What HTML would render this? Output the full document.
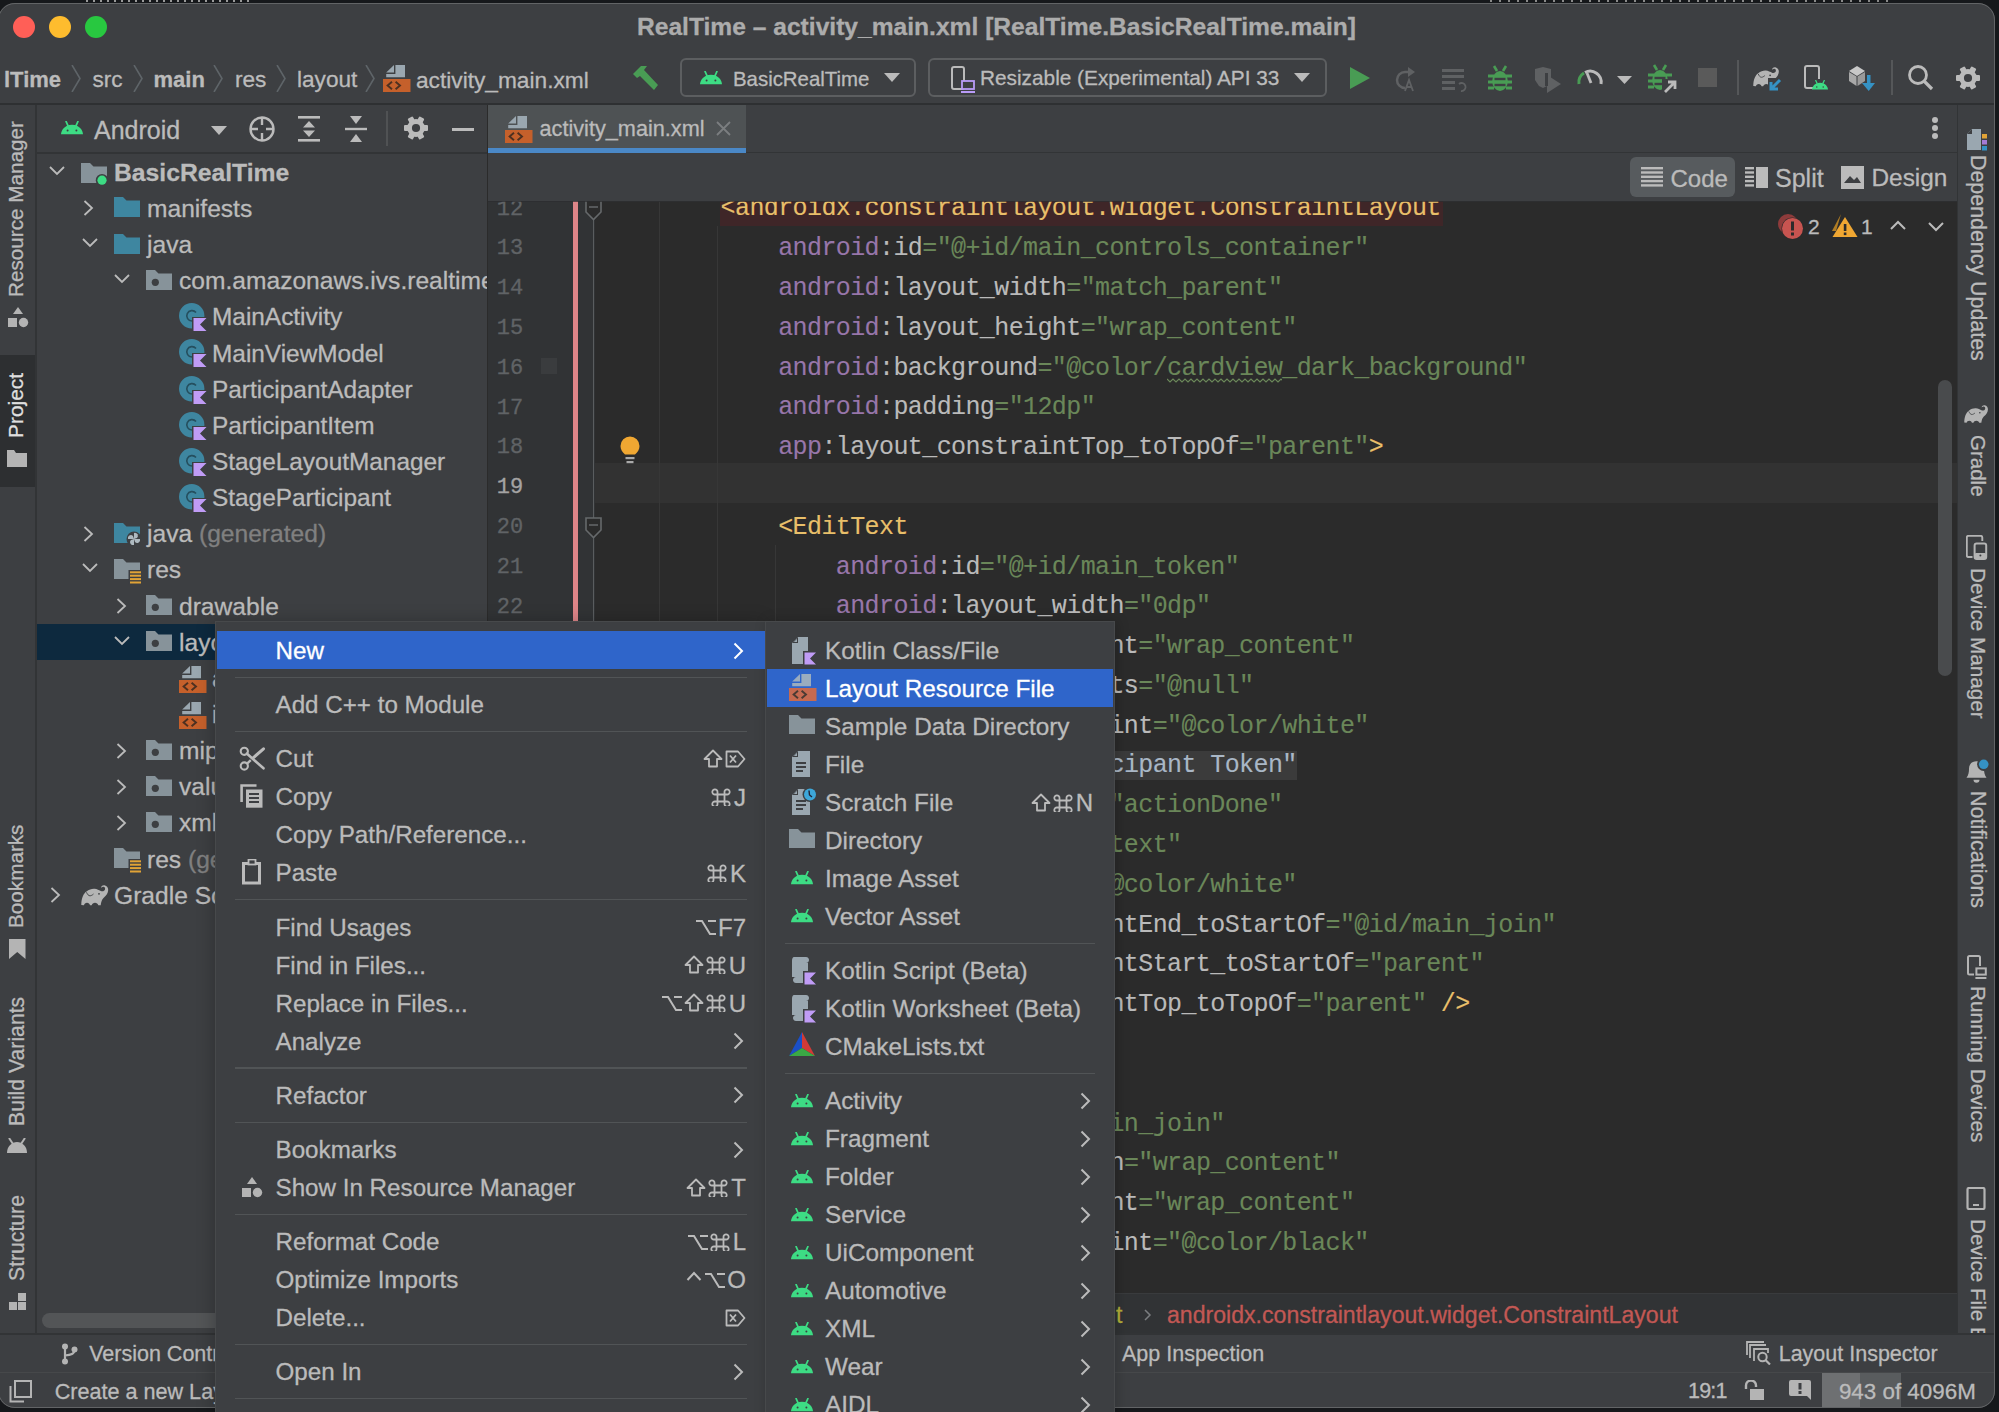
<!DOCTYPE html><html><head><meta charset="utf-8"><style>
html,body{margin:0;padding:0}
body{width:1999px;height:1412px;background:#16181b;position:relative;overflow:hidden;font-family:"Liberation Sans",sans-serif}
.t{position:absolute;white-space:pre;line-height:1;-webkit-text-stroke:0.3px currentColor}
.r{position:absolute}
#win{position:absolute;left:0;top:0;width:1999px;height:1412px;clip-path:inset(3px 4px 4px -2px round 17px);background:#3d3f42}
</style></head><body>

<div class="r" style="left:86px;top:0;width:165px;height:2px;background:repeating-linear-gradient(90deg,#9a9a9a 0 2px,transparent 2px 7px)"></div>
<div class="r" style="left:1490px;top:0;width:400px;height:2px;background:repeating-linear-gradient(90deg,#8a8a8a 0 2px,transparent 2px 9px)"></div>
<div id="win">
<div class="r" style="left:0px;top:3px;width:1995px;height:49px;background:#3d3f42;"></div>
<div class="r" style="left:12.5px;top:16px;width:22px;height:22px;border-radius:50%;background:#ff5f57"></div>
<div class="r" style="left:49px;top:16px;width:22px;height:22px;border-radius:50%;background:#febc2e"></div>
<div class="r" style="left:85px;top:16px;width:22px;height:22px;border-radius:50%;background:#28c840"></div>
<div class="t" style="left:637px;top:14.5px;font-size:24.6px;color:#acacac;font-weight:bold;font-family:'Liberation Sans', sans-serif;">RealTime – activity_main.xml [RealTime.BasicRealTime.main]</div>
<div class="t" style="left:4px;top:69.2px;font-size:22px;color:#bbbbbb;font-weight:bold;font-family:'Liberation Sans', sans-serif;">lTime</div>
<svg class="r" style="left:71px;top:65px;" width="10" height="27" viewBox="0 0 10 27"><polyline points="1,0 9,13.5 1,27" fill="none" stroke="#5e6468" stroke-width="1.6"/></svg>
<div class="t" style="left:92.5px;top:68.7px;font-size:22.6px;color:#bbbbbb;font-weight:normal;font-family:'Liberation Sans', sans-serif;">src</div>
<svg class="r" style="left:133px;top:65px;" width="10" height="27" viewBox="0 0 10 27"><polyline points="1,0 9,13.5 1,27" fill="none" stroke="#5e6468" stroke-width="1.6"/></svg>
<div class="t" style="left:153.5px;top:69.2px;font-size:22px;color:#bbbbbb;font-weight:bold;font-family:'Liberation Sans', sans-serif;">main</div>
<svg class="r" style="left:213px;top:65px;" width="10" height="27" viewBox="0 0 10 27"><polyline points="1,0 9,13.5 1,27" fill="none" stroke="#5e6468" stroke-width="1.6"/></svg>
<div class="t" style="left:235px;top:68.7px;font-size:22.6px;color:#bbbbbb;font-weight:normal;font-family:'Liberation Sans', sans-serif;">res</div>
<svg class="r" style="left:276px;top:65px;" width="10" height="27" viewBox="0 0 10 27"><polyline points="1,0 9,13.5 1,27" fill="none" stroke="#5e6468" stroke-width="1.6"/></svg>
<div class="t" style="left:297px;top:68.7px;font-size:22.6px;color:#bbbbbb;font-weight:normal;font-family:'Liberation Sans', sans-serif;">layout</div>
<svg class="r" style="left:365px;top:65px;" width="10" height="27" viewBox="0 0 10 27"><polyline points="1,0 9,13.5 1,27" fill="none" stroke="#5e6468" stroke-width="1.6"/></svg>
<svg class="r" style="left:383px;top:65.3px;" width="28" height="28" viewBox="0 0 28 28"><path d="M11 0 L3.2 7.5 L11 7.5 Z" fill="#9aa7b0"/><path d="M12.4 0 L22 0 L22 12.2 L3.2 12.2 L3.2 8.9 L12.4 8.9 Z" fill="#9aa7b0"/><rect x="0" y="14" width="27.5" height="13" fill="#c5602b"/><polyline points="9,16.8 4.6,20.5 9,24.2" fill="none" stroke="#4d3020" stroke-width="1.9"/><polyline points="12.6,16.8 17,20.5 12.6,24.2" fill="none" stroke="#4d3020" stroke-width="1.9"/></svg>
<div class="t" style="left:416px;top:68.6px;font-size:22.7px;color:#bbbbbb;font-weight:normal;font-family:'Liberation Sans', sans-serif;">activity_main.xml</div>
<svg class="r" style="left:631px;top:64px;" width="30" height="28" viewBox="0 0 30 28"><path d="M2 10 L10 2 L16 2 L13 6 L27 21 L23 26 L9 12 L6 14 Z" fill="#499c54"/></svg>
<div class="r" style="left:680px;top:58px;width:236px;height:39px;border:2px solid #5c5e60;border-radius:6px;box-sizing:border-box"></div>
<svg class="r" style="left:700px;top:71px;" width="22" height="14" viewBox="0 0 22 14"><path d="M11.0 3.696 C3.3 3.696 0 9.899999999999999 0 13.2 L22 13.2 C22 9.899999999999999 18.7 3.696 11.0 3.696 Z" fill="#3ddc84"/><line x1="4.84" y1="0" x2="7.260000000000001" y2="5.28" stroke="#3ddc84" stroke-width="1.76"/><line x1="17.16" y1="0" x2="14.74" y2="5.28" stroke="#3ddc84" stroke-width="1.76"/><circle cx="6.6" cy="9.504" r="0.99" fill="#3d3f42"/><circle cx="15.399999999999999" cy="9.504" r="0.99" fill="#3d3f42"/></svg>
<div class="t" style="left:733px;top:68.5px;font-size:20.4px;color:#bbbbbb;font-weight:normal;font-family:'Liberation Sans', sans-serif;">BasicRealTime</div>
<svg class="r" style="left:884px;top:73px;" width="16" height="10" viewBox="0 0 16 10"><path d="M0 0 L16 0 L8 9 Z" fill="#bbbbbb"/></svg>
<div class="r" style="left:928px;top:58px;width:399px;height:39px;border:2px solid #5c5e60;border-radius:6px;box-sizing:border-box"></div>
<svg class="r" style="left:950px;top:66px;" width="26" height="28" viewBox="0 0 26 28"><rect x="2" y="1" width="12" height="22" rx="2" fill="none" stroke="#bbbbbb" stroke-width="2"/><rect x="12" y="15" width="12" height="8" fill="#3d3f42" stroke="#b99bf8" stroke-width="1.8"/><line x1="11" y1="26" x2="25" y2="26" stroke="#b99bf8" stroke-width="1.8"/></svg>
<div class="t" style="left:980px;top:68.2px;font-size:20.8px;color:#bbbbbb;font-weight:normal;font-family:'Liberation Sans', sans-serif;">Resizable (Experimental) API 33</div>
<svg class="r" style="left:1294px;top:73px;" width="16" height="10" viewBox="0 0 16 10"><path d="M0 0 L16 0 L8 9 Z" fill="#bbbbbb"/></svg>
<svg class="r" style="left:1349px;top:66px;" width="22" height="24" viewBox="0 0 22 24"><path d="M1 1 L21 12 L1 23 Z" fill="#499c54"/></svg>
<svg class="r" style="left:1392px;top:66px;" width="26" height="26" viewBox="0 0 26 26"><path d="M13 22 A8 8 0 1 1 13 6 L17 6" fill="none" stroke="#5f6163" stroke-width="2.5"/><path d="M16 1 L23 6 L16 11 Z" fill="#5f6163"/><path d="M13 25 L17 14 L21 25 M14.5 21 L19.5 21" fill="none" stroke="#5f6163" stroke-width="1.8"/></svg>
<svg class="r" style="left:1440px;top:67px;" width="28" height="26" viewBox="0 0 28 26"><rect x="2" y="2" width="22" height="3" fill="#5f6163"/><rect x="2" y="8" width="22" height="3" fill="#5f6163"/><rect x="2" y="14" width="13" height="3" fill="#5f6163"/><rect x="2" y="20" width="13" height="3" fill="#5f6163"/><path d="M19 17 A4 4 0 1 1 21 24" fill="none" stroke="#5f6163" stroke-width="1.8"/></svg>
<svg class="r" style="left:1488px;top:65px;" width="24" height="27" viewBox="0 0 24 27"><ellipse cx="12" cy="16" rx="7.8" ry="10" fill="#499c54"/><line x1="6" y1="1" x2="9" y2="6" stroke="#499c54" stroke-width="2.6"/><line x1="18" y1="1" x2="15" y2="6" stroke="#499c54" stroke-width="2.6"/><rect x="0" y="9.5" width="6" height="3" fill="#499c54"/><rect x="18" y="9.5" width="6" height="3" fill="#499c54"/><rect x="0" y="15.5" width="6" height="3" fill="#499c54"/><rect x="18" y="15.5" width="6" height="3" fill="#499c54"/><rect x="0" y="21.5" width="6" height="3" fill="#499c54"/><rect x="18" y="21.5" width="6" height="3" fill="#499c54"/><rect x="6.5" y="12.8" width="11" height="2.4" fill="#3d3f42"/><rect x="6.5" y="18.8" width="11" height="2.4" fill="#3d3f42"/></svg>
<svg class="r" style="left:1533px;top:66px;" width="30" height="28" viewBox="0 0 30 28"><path d="M2 3 L10 1 L18 3 L18 14 L14 20 L10 22 L6 20 L2 14 Z" fill="#5f6163"/><path d="M14 9 L28 18 L14 27 Z" fill="#5f6163"/><rect x="12" y="7" width="3" height="13" fill="#3d3f42"/></svg>
<svg class="r" style="left:1576px;top:67px;" width="28" height="20" viewBox="0 0 28 20"><path d="M3 17 A11 11 0 0 1 8 6" fill="none" stroke="#499c54" stroke-width="3"/><path d="M9 5.5 A11 11 0 0 1 25 17" fill="none" stroke="#bbbbbb" stroke-width="3"/><line x1="11" y1="6" x2="15" y2="16" stroke="#bbbbbb" stroke-width="2.8"/></svg>
<svg class="r" style="left:1617px;top:76px;" width="15" height="9" viewBox="0 0 15 9"><path d="M0 0 L15 0 L7.5 8 Z" fill="#bbbbbb"/></svg>
<svg class="r" style="left:1648px;top:64px;" width="30" height="30" viewBox="0 0 30 30"><ellipse cx="12" cy="16" rx="7.8" ry="10" fill="#499c54"/><line x1="6" y1="1" x2="9" y2="6" stroke="#499c54" stroke-width="2.6"/><line x1="18" y1="1" x2="15" y2="6" stroke="#499c54" stroke-width="2.6"/><rect x="0" y="9.5" width="6" height="3" fill="#499c54"/><rect x="18" y="9.5" width="6" height="3" fill="#499c54"/><rect x="0" y="15.5" width="6" height="3" fill="#499c54"/><rect x="18" y="15.5" width="6" height="3" fill="#499c54"/><rect x="0" y="21.5" width="6" height="3" fill="#499c54"/><rect x="18" y="21.5" width="6" height="3" fill="#499c54"/><rect x="6.5" y="12.8" width="11" height="2.4" fill="#3d3f42"/><rect x="6.5" y="18.8" width="11" height="2.4" fill="#3d3f42"/><rect x="14" y="15" width="16" height="15" fill="#3d3f42"/><path d="M17 28 L27 18 M20 18 L27 18 L27 25" fill="none" stroke="#bbbbbb" stroke-width="2.8"/></svg>
<div class="r" style="left:1698px;top:68px;width:19px;height:19px;background:#5a5a5a;"></div>
<div class="r" style="left:1737px;top:60px;width:1.5px;height:35px;background:#555759;"></div>
<svg class="r" style="left:1753px;top:66px;" width="30" height="27" viewBox="0 0 30 27"><g transform="translate(0 1) scale(0.95)"><path d="M0.3 20 C0.3 13 2.5 8.5 5.5 6.5 C8 4.5 11 3.6 13.5 3.8 C16 4 18 5.3 20.5 6.2 C22 6.6 23.5 6 24 4.5 C24.5 3 23.5 1.5 22 1.8 C21 2 20.5 2.8 20 2.5 C20.5 0.8 22 0 23.5 0.3 C26 0.8 27.3 3 27.2 5 C27 8 25.5 10.5 22.5 13 C21 14.5 20 17 19.7 20.3 L17.3 20.3 C17 18.8 15.5 17.8 14 17.8 C12.5 17.8 11 18.8 10.7 20.3 L9 20.3 C8.7 18.8 7.5 17.8 6 17.8 C4.5 17.8 3.2 18.8 3 20.3 Z" fill="#b4b4b4"/><path d="M5.5 7.3 C6.5 9.5 7.5 10.8 9 10.8 C10 10.8 11.5 10 12.5 9" fill="none" stroke="#3d3f42" stroke-width="0.9"/><circle cx="18" cy="8.8" r="0.9" fill="#3d3f42"/></g><rect x="15" y="12" width="15" height="15" fill="#3d3f42"/><path d="M27 14 L18 23 M18 16 L18 23 L25 23" fill="none" stroke="#3592c4" stroke-width="3"/></svg>
<svg class="r" style="left:1804px;top:65px;" width="26" height="28" viewBox="0 0 26 28"><rect x="1" y="1" width="14" height="22" rx="2" fill="none" stroke="#bbbbbb" stroke-width="2"/><rect x="10" y="14" width="16" height="14" fill="#3d3f42"/></svg>
<svg class="r" style="left:1812px;top:80px;" width="16" height="10" viewBox="0 0 16 10"><path d="M8.0 2.688 C2.4 2.688 0 7.199999999999999 0 9.6 L16 9.6 C16 7.199999999999999 13.6 2.688 8.0 2.688 Z" fill="#3ddc84"/><line x1="3.52" y1="0" x2="5.28" y2="3.84" stroke="#3ddc84" stroke-width="1.28"/><line x1="12.48" y1="0" x2="10.72" y2="3.84" stroke="#3ddc84" stroke-width="1.28"/><circle cx="4.8" cy="6.912" r="0.72" fill="#3d3f42"/><circle cx="11.2" cy="6.912" r="0.72" fill="#3d3f42"/></svg>
<svg class="r" style="left:1847px;top:64px;" width="32" height="30" viewBox="0 0 32 30"><path d="M2 7 L10 2 L18 7 L10 12 Z" fill="#c8c8c8"/><path d="M2 8 L9.5 12.5 L9.5 22 L2 17 Z" fill="#a8a8a8"/><path d="M10.5 12.5 L18 8 L18 17 L10.5 22 Z" fill="#9a9a9a"/><rect x="20" y="11" width="3.5" height="10" fill="#3592c4"/><path d="M15 19 L28 19 L21.7 27 Z" fill="#3592c4"/></svg>
<div class="r" style="left:1891px;top:60px;width:1.5px;height:35px;background:#555759;"></div>
<svg class="r" style="left:1907px;top:64px;" width="28" height="28" viewBox="0 0 28 28"><circle cx="11" cy="11" r="8.5" fill="none" stroke="#bbbbbb" stroke-width="2.8"/><line x1="17" y1="17" x2="25" y2="25" stroke="#bbbbbb" stroke-width="3.2"/></svg>
<svg class="r" style="left:1956px;top:66px;" width="24" height="24" viewBox="0 0 24 24"><circle cx="12.0" cy="12.0" r="8.879999999999999" fill="#bbbbbb"/><rect x="9.120000000000001" y="0" width="5.76" height="7.199999999999999" rx="1" fill="#bbbbbb" transform="rotate(30 12.0 12.0)"/><rect x="9.120000000000001" y="0" width="5.76" height="7.199999999999999" rx="1" fill="#bbbbbb" transform="rotate(90 12.0 12.0)"/><rect x="9.120000000000001" y="0" width="5.76" height="7.199999999999999" rx="1" fill="#bbbbbb" transform="rotate(150 12.0 12.0)"/><rect x="9.120000000000001" y="0" width="5.76" height="7.199999999999999" rx="1" fill="#bbbbbb" transform="rotate(210 12.0 12.0)"/><rect x="9.120000000000001" y="0" width="5.76" height="7.199999999999999" rx="1" fill="#bbbbbb" transform="rotate(270 12.0 12.0)"/><rect x="9.120000000000001" y="0" width="5.76" height="7.199999999999999" rx="1" fill="#bbbbbb" transform="rotate(330 12.0 12.0)"/><circle cx="12.0" cy="12.0" r="4.08" fill="#3d3f42"/></svg>
<div class="r" style="left:0px;top:103px;width:1995px;height:2px;background:#2e3032;"></div>
<div class="r" style="left:0px;top:105px;width:35px;height:1230px;background:#3d3f42;"></div>
<div class="r" style="left:35px;top:105px;width:1.5px;height:1230px;background:#323436;"></div>
<div class="r" style="left:0px;top:355px;width:35px;height:132px;background:#2d2f31;"></div>
<div class="t" style="left:6.2px;top:297px;font-size:20.7px;color:#bbbbbb;transform-origin:0 0;transform:rotate(-90deg)">Resource Manager</div>
<svg class="r" style="left:7px;top:307px;" width="22" height="21" viewBox="0 0 22 21"><path d="M11 0 L16 7 L6 7 Z" fill="#b4b4b4"/><rect x="1" y="11" width="9" height="9" fill="#b4b4b4"/><circle cx="16.5" cy="15.5" r="4.7" fill="#b4b4b4"/></svg>
<div class="t" style="left:6.2px;top:438px;font-size:20.9px;color:#dfdfdf;transform-origin:0 0;transform:rotate(-90deg)">Project</div>
<svg class="r" style="left:7px;top:450px;" width="21" height="17" viewBox="0 0 21 17"><path d="M0 0 L7 0 L9 3 L20 3 L20 17 L0 17 Z" fill="#b4b4b4"/></svg>
<div class="t" style="left:6.2px;top:928.3px;font-size:20.7px;color:#bbbbbb;transform-origin:0 0;transform:rotate(-90deg)">Bookmarks</div>
<svg class="r" style="left:9px;top:938.5px;" width="17" height="20" viewBox="0 0 17 20"><path d="M0 0 L16.5 0 L16.5 20 L8.25 13 L0 20 Z" fill="#b4b4b4"/></svg>
<div class="t" style="left:6.2px;top:1125.7px;font-size:21.2px;color:#bbbbbb;transform-origin:0 0;transform:rotate(-90deg)">Build Variants</div>
<svg class="r" style="left:6px;top:1137.5px;" width="22" height="16" viewBox="0 0 22 16"><path d="M1 15 C1 8 6 4 11 4 C16 4 21 8 21 15 Z" fill="#b4b4b4"/><line x1="3" y1="0" x2="7" y2="6" stroke="#b4b4b4" stroke-width="2"/><line x1="19" y1="0" x2="15" y2="6" stroke="#b4b4b4" stroke-width="2"/></svg>
<div class="t" style="left:6.2px;top:1281px;font-size:21.2px;color:#bbbbbb;transform-origin:0 0;transform:rotate(-90deg)">Structure</div>
<svg class="r" style="left:8.5px;top:1293px;" width="18" height="18" viewBox="0 0 18 18"><rect x="9" y="0" width="8" height="8" fill="#b4b4b4"/><rect x="0" y="9" width="8" height="8" fill="#b4b4b4"/><rect x="9" y="9" width="8" height="8" fill="#b4b4b4"/></svg>
<div class="r" style="left:36.5px;top:105px;width:451px;height:1230px;background:#3d3f42;"></div>
<svg class="r" style="left:61px;top:121px;" width="22" height="14" viewBox="0 0 22 14"><path d="M11.0 3.696 C3.3 3.696 0 9.899999999999999 0 13.2 L22 13.2 C22 9.899999999999999 18.7 3.696 11.0 3.696 Z" fill="#3ddc84"/><line x1="4.84" y1="0" x2="7.260000000000001" y2="5.28" stroke="#3ddc84" stroke-width="1.76"/><line x1="17.16" y1="0" x2="14.74" y2="5.28" stroke="#3ddc84" stroke-width="1.76"/><circle cx="6.6" cy="9.504" r="0.99" fill="#3d3f42"/><circle cx="15.399999999999999" cy="9.504" r="0.99" fill="#3d3f42"/></svg>
<div class="t" style="left:94px;top:117.9px;font-size:25px;color:#bbbbbb;font-weight:normal;font-family:'Liberation Sans', sans-serif;">Android</div>
<svg class="r" style="left:211px;top:126px;" width="16" height="10" viewBox="0 0 16 10"><path d="M0 0 L16 0 L8 9 Z" fill="#bbbbbb"/></svg>
<svg class="r" style="left:248px;top:115px;" width="28" height="28" viewBox="0 0 28 28"><circle cx="14" cy="14" r="11.5" fill="none" stroke="#bbbbbb" stroke-width="2.4"/><path d="M14 2 L14 10 M14 18 L14 26 M2 14 L10 14 M18 14 L26 14" stroke="#bbbbbb" stroke-width="2.4"/></svg>
<svg class="r" style="left:297px;top:115px;" width="24" height="28" viewBox="0 0 24 28"><rect x="1" y="1" width="22" height="2.6" fill="#bbbbbb"/><rect x="1" y="24" width="22" height="2.6" fill="#bbbbbb"/><path d="M12 6 L18 12.5 L6 12.5 Z M12 22 L18 15.5 L6 15.5 Z" fill="#bbbbbb"/></svg>
<svg class="r" style="left:344px;top:115px;" width="24" height="28" viewBox="0 0 24 28"><path d="M6 1 L18 1 L12 9 Z M6 27 L18 27 L12 19 Z" fill="#bbbbbb"/><rect x="1" y="12.8" width="22" height="2.4" fill="#bbbbbb"/></svg>
<div class="r" style="left:386px;top:111px;width:1.5px;height:35px;background:#505254;"></div>
<svg class="r" style="left:404px;top:116px;" width="24" height="24" viewBox="0 0 24 24"><circle cx="12.0" cy="12.0" r="8.879999999999999" fill="#bbbbbb"/><rect x="9.120000000000001" y="0" width="5.76" height="7.199999999999999" rx="1" fill="#bbbbbb" transform="rotate(30 12.0 12.0)"/><rect x="9.120000000000001" y="0" width="5.76" height="7.199999999999999" rx="1" fill="#bbbbbb" transform="rotate(90 12.0 12.0)"/><rect x="9.120000000000001" y="0" width="5.76" height="7.199999999999999" rx="1" fill="#bbbbbb" transform="rotate(150 12.0 12.0)"/><rect x="9.120000000000001" y="0" width="5.76" height="7.199999999999999" rx="1" fill="#bbbbbb" transform="rotate(210 12.0 12.0)"/><rect x="9.120000000000001" y="0" width="5.76" height="7.199999999999999" rx="1" fill="#bbbbbb" transform="rotate(270 12.0 12.0)"/><rect x="9.120000000000001" y="0" width="5.76" height="7.199999999999999" rx="1" fill="#bbbbbb" transform="rotate(330 12.0 12.0)"/><circle cx="12.0" cy="12.0" r="4.08" fill="#3d3f42"/></svg>
<div class="r" style="left:452px;top:128px;width:22px;height:3px;background:#bbbbbb;"></div>
<div class="r" style="left:36.5px;top:152px;width:451px;height:1.5px;background:#323436;"></div>
<div class="r" style="left:36.5px;top:624px;width:451px;height:36px;background:#0d293e;"></div>
<svg class="r" style="left:49px;top:165.7px;" width="16" height="10" viewBox="0 0 16 10"><polyline points="1,1 8,8 15,1" fill="none" stroke="#bbbbbb" stroke-width="1.8"/></svg>
<svg class="r" style="left:81px;top:162.79999999999998px;" width="27" height="22" viewBox="0 0 27 22"><path d="M0 0 L9 0 L12.5 3.6 L26 3.6 L26 20 L0 20 Z" fill="#87939a"/><circle cx="21" cy="17.2" r="6.2" fill="#3d3f42"/><circle cx="21" cy="17.2" r="4.6" fill="#3ddc84"/></svg>
<div class="t" style="left:114px;top:160.6px;font-size:24.7px;color:#bbbbbb;font-weight:bold;font-family:'Liberation Sans', sans-serif;">BasicRealTime</div>
<svg class="r" style="left:83.2px;top:200.35px;" width="11" height="16" viewBox="0 0 11 16"><polyline points="1.5,1 9,8 1.5,15" fill="none" stroke="#bbbbbb" stroke-width="1.8"/></svg>
<svg class="r" style="left:114px;top:197.35px;" width="27" height="22" viewBox="0 0 27 22"><path d="M0 0 L9 0 L12.5 3.6 L26 3.6 L26 20 L0 20 Z" fill="#3e86a0"/></svg>
<div class="t" style="left:147px;top:196.8px;font-size:24.6px;color:#bbbbbb;font-weight:normal;font-family:'Liberation Sans', sans-serif;">manifests</div>
<svg class="r" style="left:82px;top:238.0px;" width="16" height="10" viewBox="0 0 16 10"><polyline points="1,1 8,8 15,1" fill="none" stroke="#bbbbbb" stroke-width="1.8"/></svg>
<svg class="r" style="left:114px;top:233.5px;" width="27" height="22" viewBox="0 0 27 22"><path d="M0 0 L9 0 L12.5 3.6 L26 3.6 L26 20 L0 20 Z" fill="#3e86a0"/></svg>
<div class="t" style="left:147px;top:233.0px;font-size:24.6px;color:#bbbbbb;font-weight:normal;font-family:'Liberation Sans', sans-serif;">java</div>
<svg class="r" style="left:114px;top:274.15px;" width="16" height="10" viewBox="0 0 16 10"><polyline points="1,1 8,8 15,1" fill="none" stroke="#bbbbbb" stroke-width="1.8"/></svg>
<svg class="r" style="left:146px;top:269.65px;" width="27" height="22" viewBox="0 0 27 22"><path d="M0 0 L9 0 L12.5 3.6 L26 3.6 L26 20 L0 20 Z" fill="#87939a"/><circle cx="9.3" cy="12.3" r="3.6" fill="#3d3f42"/></svg>
<div class="t" style="left:179px;top:269.1px;font-size:24.6px;color:#bbbbbb;font-weight:normal;font-family:'Liberation Sans', sans-serif;">com.amazonaws.ivs.realtime</div>
<svg class="r" style="left:179px;top:303.29999999999995px;" width="29" height="29" viewBox="0 0 29 29"><circle cx="12.7" cy="12.8" r="12.7" fill="#3e86a0"/><path d="M17 9.5 A5.2 5.2 0 1 0 13 18" fill="none" stroke="#254f5e" stroke-width="1.6"/><path d="M13 14 L28.5 14 L28.5 28 L13 28 Z" fill="#3d3f42"/><path d="M14.5 15 L27.5 15 L21 21.5 L27.5 28 L14.5 28 Z" fill="#c09cf6"/></svg>
<div class="t" style="left:212px;top:305.4px;font-size:24.4px;color:#bbbbbb;font-weight:normal;font-family:'Liberation Sans', sans-serif;">MainActivity</div>
<svg class="r" style="left:179px;top:339.45px;" width="29" height="29" viewBox="0 0 29 29"><circle cx="12.7" cy="12.8" r="12.7" fill="#3e86a0"/><path d="M17 9.5 A5.2 5.2 0 1 0 13 18" fill="none" stroke="#254f5e" stroke-width="1.6"/><path d="M13 14 L28.5 14 L28.5 28 L13 28 Z" fill="#3d3f42"/><path d="M14.5 15 L27.5 15 L21 21.5 L27.5 28 L14.5 28 Z" fill="#c09cf6"/></svg>
<div class="t" style="left:212px;top:341.6px;font-size:24.4px;color:#bbbbbb;font-weight:normal;font-family:'Liberation Sans', sans-serif;">MainViewModel</div>
<svg class="r" style="left:179px;top:375.59999999999997px;" width="29" height="29" viewBox="0 0 29 29"><circle cx="12.7" cy="12.8" r="12.7" fill="#3e86a0"/><path d="M17 9.5 A5.2 5.2 0 1 0 13 18" fill="none" stroke="#254f5e" stroke-width="1.6"/><path d="M13 14 L28.5 14 L28.5 28 L13 28 Z" fill="#3d3f42"/><path d="M14.5 15 L27.5 15 L21 21.5 L27.5 28 L14.5 28 Z" fill="#c09cf6"/></svg>
<div class="t" style="left:212px;top:377.7px;font-size:24.4px;color:#bbbbbb;font-weight:normal;font-family:'Liberation Sans', sans-serif;">ParticipantAdapter</div>
<svg class="r" style="left:179px;top:411.75px;" width="29" height="29" viewBox="0 0 29 29"><circle cx="12.7" cy="12.8" r="12.7" fill="#3e86a0"/><path d="M17 9.5 A5.2 5.2 0 1 0 13 18" fill="none" stroke="#254f5e" stroke-width="1.6"/><path d="M13 14 L28.5 14 L28.5 28 L13 28 Z" fill="#3d3f42"/><path d="M14.5 15 L27.5 15 L21 21.5 L27.5 28 L14.5 28 Z" fill="#c09cf6"/></svg>
<div class="t" style="left:212px;top:413.9px;font-size:24.4px;color:#bbbbbb;font-weight:normal;font-family:'Liberation Sans', sans-serif;">ParticipantItem</div>
<svg class="r" style="left:179px;top:447.9px;" width="29" height="29" viewBox="0 0 29 29"><circle cx="12.7" cy="12.8" r="12.7" fill="#3e86a0"/><path d="M17 9.5 A5.2 5.2 0 1 0 13 18" fill="none" stroke="#254f5e" stroke-width="1.6"/><path d="M13 14 L28.5 14 L28.5 28 L13 28 Z" fill="#3d3f42"/><path d="M14.5 15 L27.5 15 L21 21.5 L27.5 28 L14.5 28 Z" fill="#c09cf6"/></svg>
<div class="t" style="left:212px;top:450.0px;font-size:24.4px;color:#bbbbbb;font-weight:normal;font-family:'Liberation Sans', sans-serif;">StageLayoutManager</div>
<svg class="r" style="left:179px;top:484.04999999999995px;" width="29" height="29" viewBox="0 0 29 29"><circle cx="12.7" cy="12.8" r="12.7" fill="#3e86a0"/><path d="M17 9.5 A5.2 5.2 0 1 0 13 18" fill="none" stroke="#254f5e" stroke-width="1.6"/><path d="M13 14 L28.5 14 L28.5 28 L13 28 Z" fill="#3d3f42"/><path d="M14.5 15 L27.5 15 L21 21.5 L27.5 28 L14.5 28 Z" fill="#c09cf6"/></svg>
<div class="t" style="left:212px;top:486.2px;font-size:24.4px;color:#bbbbbb;font-weight:normal;font-family:'Liberation Sans', sans-serif;">StageParticipant</div>
<svg class="r" style="left:83.2px;top:525.7px;" width="11" height="16" viewBox="0 0 11 16"><polyline points="1.5,1 9,8 1.5,15" fill="none" stroke="#bbbbbb" stroke-width="1.8"/></svg>
<svg class="r" style="left:114px;top:522.7px;" width="27" height="22" viewBox="0 0 27 22"><path d="M0 0 L9 0 L12.5 3.6 L26 3.6 L26 20 L0 20 Z" fill="#3e86a0"/><circle cx="20" cy="16" r="7.5" fill="#3d3f42"/><g transform="translate(20 16)" fill="#aeb9c0"><path d="M0 -6 A3 3 0 0 1 3 -1 L0 0 Z" /><path d="M6 0 A3 3 0 0 1 1 3 L0 0 Z"/><path d="M0 6 A3 3 0 0 1 -3 1 L0 0 Z"/><path d="M-6 0 A3 3 0 0 1 -1 -3 L0 0 Z"/></g></svg>
<div class="t" style="left:147px;top:522.2px;font-size:24.6px;color:#bbbbbb;font-weight:normal;font-family:'Liberation Sans', sans-serif;">java <span style="color:#808080">(generated)</span></div>
<svg class="r" style="left:82px;top:563.3499999999999px;" width="16" height="10" viewBox="0 0 16 10"><polyline points="1,1 8,8 15,1" fill="none" stroke="#bbbbbb" stroke-width="1.8"/></svg>
<svg class="r" style="left:114px;top:558.8499999999999px;" width="29" height="26" viewBox="0 0 29 26"><path d="M0 0 L9 0 L12.5 3.6 L26 3.6 L26 20 L0 20 Z" fill="#87939a"/><rect x="14.5" y="11" width="14.5" height="15" fill="#3d3f42"/><rect x="16" y="12.3" width="11" height="2" fill="#e1a336"/><rect x="16" y="15.7" width="11" height="2" fill="#e1a336"/><rect x="16" y="19.1" width="11" height="2" fill="#e1a336"/><rect x="16" y="22.5" width="11" height="2" fill="#e1a336"/></svg>
<div class="t" style="left:147px;top:558.3px;font-size:24.6px;color:#bbbbbb;font-weight:normal;font-family:'Liberation Sans', sans-serif;">res</div>
<svg class="r" style="left:116.2px;top:598.0px;" width="11" height="16" viewBox="0 0 11 16"><polyline points="1.5,1 9,8 1.5,15" fill="none" stroke="#bbbbbb" stroke-width="1.8"/></svg>
<svg class="r" style="left:146px;top:595.0px;" width="27" height="22" viewBox="0 0 27 22"><path d="M0 0 L9 0 L12.5 3.6 L26 3.6 L26 20 L0 20 Z" fill="#87939a"/><circle cx="9.3" cy="12.3" r="3.6" fill="#3d3f42"/></svg>
<div class="t" style="left:179px;top:594.5px;font-size:24.6px;color:#bbbbbb;font-weight:normal;font-family:'Liberation Sans', sans-serif;">drawable</div>
<svg class="r" style="left:114px;top:635.65px;" width="16" height="10" viewBox="0 0 16 10"><polyline points="1,1 8,8 15,1" fill="none" stroke="#bbbbbb" stroke-width="1.8"/></svg>
<svg class="r" style="left:146px;top:631.15px;" width="27" height="22" viewBox="0 0 27 22"><path d="M0 0 L9 0 L12.5 3.6 L26 3.6 L26 20 L0 20 Z" fill="#87939a"/><circle cx="9.3" cy="12.3" r="3.6" fill="#3d3f42"/></svg>
<div class="t" style="left:179px;top:630.6px;font-size:24.6px;color:#bbbbbb;font-weight:normal;font-family:'Liberation Sans', sans-serif;">layout</div>
<svg class="r" style="left:179px;top:665.8px;" width="28" height="28" viewBox="0 0 28 28"><path d="M11 0 L3.2 7.5 L11 7.5 Z" fill="#9aa7b0"/><path d="M12.4 0 L22 0 L22 12.2 L3.2 12.2 L3.2 8.9 L12.4 8.9 Z" fill="#9aa7b0"/><rect x="0" y="14" width="27.5" height="13" fill="#c5602b"/><polyline points="9,16.8 4.6,20.5 9,24.2" fill="none" stroke="#4d3020" stroke-width="1.9"/><polyline points="12.6,16.8 17,20.5 12.6,24.2" fill="none" stroke="#4d3020" stroke-width="1.9"/></svg>
<div class="t" style="left:212px;top:666.9px;font-size:24.4px;color:#bbbbbb;font-weight:normal;font-family:'Liberation Sans', sans-serif;">activity_main.xml</div>
<svg class="r" style="left:179px;top:701.95px;" width="28" height="28" viewBox="0 0 28 28"><path d="M11 0 L3.2 7.5 L11 7.5 Z" fill="#9aa7b0"/><path d="M12.4 0 L22 0 L22 12.2 L3.2 12.2 L3.2 8.9 L12.4 8.9 Z" fill="#9aa7b0"/><rect x="0" y="14" width="27.5" height="13" fill="#c5602b"/><polyline points="9,16.8 4.6,20.5 9,24.2" fill="none" stroke="#4d3020" stroke-width="1.9"/><polyline points="12.6,16.8 17,20.5 12.6,24.2" fill="none" stroke="#4d3020" stroke-width="1.9"/></svg>
<div class="t" style="left:212px;top:703.1px;font-size:24.4px;color:#bbbbbb;font-weight:normal;font-family:'Liberation Sans', sans-serif;">item_participant.xml</div>
<svg class="r" style="left:116.2px;top:742.5999999999999px;" width="11" height="16" viewBox="0 0 11 16"><polyline points="1.5,1 9,8 1.5,15" fill="none" stroke="#bbbbbb" stroke-width="1.8"/></svg>
<svg class="r" style="left:146px;top:739.5999999999999px;" width="27" height="22" viewBox="0 0 27 22"><path d="M0 0 L9 0 L12.5 3.6 L26 3.6 L26 20 L0 20 Z" fill="#87939a"/><circle cx="9.3" cy="12.3" r="3.6" fill="#3d3f42"/></svg>
<div class="t" style="left:179px;top:739.1px;font-size:24.6px;color:#bbbbbb;font-weight:normal;font-family:'Liberation Sans', sans-serif;">mipmap</div>
<svg class="r" style="left:116.2px;top:778.75px;" width="11" height="16" viewBox="0 0 11 16"><polyline points="1.5,1 9,8 1.5,15" fill="none" stroke="#bbbbbb" stroke-width="1.8"/></svg>
<svg class="r" style="left:146px;top:775.75px;" width="27" height="22" viewBox="0 0 27 22"><path d="M0 0 L9 0 L12.5 3.6 L26 3.6 L26 20 L0 20 Z" fill="#87939a"/><circle cx="9.3" cy="12.3" r="3.6" fill="#3d3f42"/></svg>
<div class="t" style="left:179px;top:775.2px;font-size:24.6px;color:#bbbbbb;font-weight:normal;font-family:'Liberation Sans', sans-serif;">values</div>
<svg class="r" style="left:116.2px;top:814.8999999999999px;" width="11" height="16" viewBox="0 0 11 16"><polyline points="1.5,1 9,8 1.5,15" fill="none" stroke="#bbbbbb" stroke-width="1.8"/></svg>
<svg class="r" style="left:146px;top:811.8999999999999px;" width="27" height="22" viewBox="0 0 27 22"><path d="M0 0 L9 0 L12.5 3.6 L26 3.6 L26 20 L0 20 Z" fill="#87939a"/><circle cx="9.3" cy="12.3" r="3.6" fill="#3d3f42"/></svg>
<div class="t" style="left:179px;top:811.4px;font-size:24.6px;color:#bbbbbb;font-weight:normal;font-family:'Liberation Sans', sans-serif;">xml</div>
<svg class="r" style="left:114px;top:848.05px;" width="29" height="26" viewBox="0 0 29 26"><path d="M0 0 L9 0 L12.5 3.6 L26 3.6 L26 20 L0 20 Z" fill="#87939a"/><rect x="14.5" y="11" width="14.5" height="15" fill="#3d3f42"/><rect x="16" y="12.3" width="11" height="2" fill="#e1a336"/><rect x="16" y="15.7" width="11" height="2" fill="#e1a336"/><rect x="16" y="19.1" width="11" height="2" fill="#e1a336"/><rect x="16" y="22.5" width="11" height="2" fill="#e1a336"/></svg>
<div class="t" style="left:147px;top:847.5px;font-size:24.6px;color:#bbbbbb;font-weight:normal;font-family:'Liberation Sans', sans-serif;">res <span style="color:#808080">(generated)</span></div>
<svg class="r" style="left:50.2px;top:887.2px;" width="11" height="16" viewBox="0 0 11 16"><polyline points="1.5,1 9,8 1.5,15" fill="none" stroke="#bbbbbb" stroke-width="1.8"/></svg>
<svg class="r" style="left:80.5px;top:884.7px;" width="28" height="22" viewBox="0 0 28 22"><path d="M0.3 20 C0.3 13 2.5 8.5 5.5 6.5 C8 4.5 11 3.6 13.5 3.8 C16 4 18 5.3 20.5 6.2 C22 6.6 23.5 6 24 4.5 C24.5 3 23.5 1.5 22 1.8 C21 2 20.5 2.8 20 2.5 C20.5 0.8 22 0 23.5 0.3 C26 0.8 27.3 3 27.2 5 C27 8 25.5 10.5 22.5 13 C21 14.5 20 17 19.7 20.3 L17.3 20.3 C17 18.8 15.5 17.8 14 17.8 C12.5 17.8 11 18.8 10.7 20.3 L9 20.3 C8.7 18.8 7.5 17.8 6 17.8 C4.5 17.8 3.2 18.8 3 20.3 Z" fill="#b4b4b4"/><path d="M5.5 7.3 C6.5 9.5 7.5 10.8 9 10.8 C10 10.8 11.5 10 12.5 9" fill="none" stroke="#3d3f42" stroke-width="0.9"/><circle cx="18" cy="8.8" r="0.9" fill="#3d3f42"/></svg>
<div class="t" style="left:114px;top:883.7px;font-size:24.6px;color:#bbbbbb;font-weight:normal;font-family:'Liberation Sans', sans-serif;">Gradle Scripts</div>
<div class="r" style="left:42px;top:1313px;width:440px;height:15px;border-radius:8px;background:#535557"></div>
<div class="r" style="left:486.5px;top:105px;width:1.5px;height:1230px;background:#2b2b2b;"></div>
<div class="r" style="left:488px;top:105px;width:1470px;height:48px;background:#3d3f42;"></div>
<div class="r" style="left:488px;top:105px;width:258px;height:43px;background:#4e5254;"></div>
<div class="r" style="left:488px;top:148px;width:258px;height:5px;background:#4a88c7;"></div>
<div class="r" style="left:746px;top:152px;width:1212px;height:1px;background:#323436;"></div>
<svg class="r" style="left:504.5px;top:116px;" width="28" height="28" viewBox="0 0 28 28"><path d="M11 0 L3.2 7.5 L11 7.5 Z" fill="#9aa7b0"/><path d="M12.4 0 L22 0 L22 12.2 L3.2 12.2 L3.2 8.9 L12.4 8.9 Z" fill="#9aa7b0"/><rect x="0" y="14" width="27.5" height="13" fill="#c5602b"/><polyline points="9,16.8 4.6,20.5 9,24.2" fill="none" stroke="#4d3020" stroke-width="1.9"/><polyline points="12.6,16.8 17,20.5 12.6,24.2" fill="none" stroke="#4d3020" stroke-width="1.9"/></svg>
<div class="t" style="left:539.5px;top:118.1px;font-size:21.7px;color:#bbbbbb;font-weight:normal;font-family:'Liberation Sans', sans-serif;">activity_main.xml</div>
<svg class="r" style="left:716px;top:121px;" width="15" height="15" viewBox="0 0 15 15"><path d="M1 1 L14 14 M14 1 L1 14" stroke="#7b7e80" stroke-width="1.8"/></svg>
<div class="r" style="left:1932px;top:117px;width:6px;height:6px;border-radius:50%;background:#bbbbbb"></div>
<div class="r" style="left:1932px;top:125px;width:6px;height:6px;border-radius:50%;background:#bbbbbb"></div>
<div class="r" style="left:1932px;top:133px;width:6px;height:6px;border-radius:50%;background:#bbbbbb"></div>
<div class="r" style="left:488px;top:153px;width:1470px;height:48px;background:#3d3f42;"></div>
<div class="r" style="left:1630px;top:157px;width:105px;height:40px;border-radius:6px;background:#575b5e"></div>
<svg class="r" style="left:1641px;top:167px;" width="22" height="21" viewBox="0 0 22 21"><rect x="0" y="0.0" width="22" height="2.4" fill="#bbbbbb"/><rect x="0" y="4.3" width="22" height="2.4" fill="#bbbbbb"/><rect x="0" y="8.6" width="22" height="2.4" fill="#bbbbbb"/><rect x="0" y="12.9" width="22" height="2.4" fill="#bbbbbb"/><rect x="0" y="17.2" width="22" height="2.4" fill="#bbbbbb"/></svg>
<div class="t" style="left:1670.5px;top:166.7px;font-size:24px;color:#bbbbbb;font-weight:normal;font-family:'Liberation Sans', sans-serif;">Code</div>
<svg class="r" style="left:1745px;top:167px;" width="24" height="21" viewBox="0 0 24 21"><rect x="0" y="0.0" width="9" height="2.4" fill="#bbbbbb"/><rect x="0" y="4.3" width="9" height="2.4" fill="#bbbbbb"/><rect x="0" y="8.6" width="9" height="2.4" fill="#bbbbbb"/><rect x="0" y="12.9" width="9" height="2.4" fill="#bbbbbb"/><rect x="0" y="17.2" width="9" height="2.4" fill="#bbbbbb"/><rect x="11" y="0" width="12" height="21" fill="#bbbbbb"/></svg>
<div class="t" style="left:1775px;top:165.8px;font-size:25px;color:#bbbbbb;font-weight:normal;font-family:'Liberation Sans', sans-serif;">Split</div>
<svg class="r" style="left:1841px;top:166px;" width="23" height="23" viewBox="0 0 23 23"><rect x="0" y="0" width="23" height="23" fill="#bbbbbb"/><path d="M3 17 L9 10 L13 14 L16 11 L20 17 Z" fill="#3d3f42"/></svg>
<div class="t" style="left:1871.5px;top:166.3px;font-size:24.4px;color:#bbbbbb;font-weight:normal;font-family:'Liberation Sans', sans-serif;">Design</div>
<div class="r" style="left:488px;top:200.5px;width:1470px;height:1px;background:#2f3133;"></div>
<div class="r" style="left:0;top:0;width:1999px;height:1412px;clip-path:inset(201.7px 41px 119px 488px)">
<div class="r" style="left:488px;top:195px;width:1470px;height:1100px;background:#2b2b2b;"></div>
<div class="r" style="left:488px;top:195px;width:106.5px;height:1100px;background:#313335;"></div>
<div class="r" style="left:594.5px;top:463.44px;width:1364px;height:39.79px;background:#323232;"></div>
<div class="r" style="left:720px;top:201px;width:723px;height:24.7px;background:#3f2628;"></div>
<div class="r" style="left:573px;top:201px;width:4.5px;height:1092px;background:#de8588;"></div>
<div class="r" style="left:593px;top:220px;width:1.3px;height:1073px;background:#5a5d5f;"></div>
<svg class="r" style="left:585px;top:199px;" width="17" height="22" viewBox="0 0 17 22"><path d="M1 -1 L16 -1 L16 13 L8.5 20.5 L1 13 Z" fill="#2b2b2b" stroke="#66696b" stroke-width="1.6"/><line x1="4" y1="8" x2="13" y2="8" stroke="#66696b" stroke-width="1.5"/></svg>
<svg class="r" style="left:585px;top:517.03px;" width="17" height="22" viewBox="0 0 17 22"><path d="M1 1 L16 1 L16 13 L8.5 20.5 L1 13 Z" fill="#2b2b2b" stroke="#66696b" stroke-width="1.6"/><line x1="4" y1="8" x2="13" y2="8" stroke="#66696b" stroke-width="1.5"/></svg>
<div class="r" style="left:541px;top:357.67px;width:16px;height:16px;background:#3a3c3e;"></div>
<div class="r" style="left:659px;top:201px;width:1.2px;height:1092px;background:#373737;"></div>
<div class="r" style="left:717px;top:226px;width:1.2px;height:1067px;background:#373737;"></div>
<div class="r" style="left:775px;top:545px;width:1.2px;height:748px;background:#373737;"></div>
<div class="t" style="left:496.7px;top:198.6px;font-size:22px;font-family:'Liberation Mono', monospace;color:#606366">12</div>
<div class="t" style="left:496.7px;top:238.4px;font-size:22px;font-family:'Liberation Mono', monospace;color:#606366">13</div>
<div class="t" style="left:496.7px;top:278.2px;font-size:22px;font-family:'Liberation Mono', monospace;color:#606366">14</div>
<div class="t" style="left:496.7px;top:318.0px;font-size:22px;font-family:'Liberation Mono', monospace;color:#606366">15</div>
<div class="t" style="left:496.7px;top:357.8px;font-size:22px;font-family:'Liberation Mono', monospace;color:#606366">16</div>
<div class="t" style="left:496.7px;top:397.6px;font-size:22px;font-family:'Liberation Mono', monospace;color:#606366">17</div>
<div class="t" style="left:496.7px;top:437.4px;font-size:22px;font-family:'Liberation Mono', monospace;color:#606366">18</div>
<div class="t" style="left:496.7px;top:477.2px;font-size:22px;font-family:'Liberation Mono', monospace;color:#a4a3a3">19</div>
<div class="t" style="left:496.7px;top:517.0px;font-size:22px;font-family:'Liberation Mono', monospace;color:#606366">20</div>
<div class="t" style="left:496.7px;top:556.8px;font-size:22px;font-family:'Liberation Mono', monospace;color:#606366">21</div>
<div class="t" style="left:496.7px;top:596.5px;font-size:22px;font-family:'Liberation Mono', monospace;color:#606366">22</div>
<div class="t" style="left:496.7px;top:636.3px;font-size:22px;font-family:'Liberation Mono', monospace;color:#606366">23</div>
<div class="t" style="left:496.7px;top:676.1px;font-size:22px;font-family:'Liberation Mono', monospace;color:#606366">24</div>
<div class="t" style="left:496.7px;top:715.9px;font-size:22px;font-family:'Liberation Mono', monospace;color:#606366">25</div>
<div class="t" style="left:496.7px;top:755.7px;font-size:22px;font-family:'Liberation Mono', monospace;color:#606366">26</div>
<div class="t" style="left:496.7px;top:795.5px;font-size:22px;font-family:'Liberation Mono', monospace;color:#606366">27</div>
<div class="t" style="left:496.7px;top:835.3px;font-size:22px;font-family:'Liberation Mono', monospace;color:#606366">28</div>
<div class="t" style="left:496.7px;top:875.1px;font-size:22px;font-family:'Liberation Mono', monospace;color:#606366">29</div>
<div class="t" style="left:496.7px;top:914.9px;font-size:22px;font-family:'Liberation Mono', monospace;color:#606366">30</div>
<div class="t" style="left:496.7px;top:954.7px;font-size:22px;font-family:'Liberation Mono', monospace;color:#606366">31</div>
<div class="t" style="left:496.7px;top:994.4px;font-size:22px;font-family:'Liberation Mono', monospace;color:#606366">32</div>
<div class="t" style="left:496.7px;top:1034.2px;font-size:22px;font-family:'Liberation Mono', monospace;color:#606366">33</div>
<div class="t" style="left:496.7px;top:1074.0px;font-size:22px;font-family:'Liberation Mono', monospace;color:#606366">34</div>
<div class="t" style="left:496.7px;top:1113.8px;font-size:22px;font-family:'Liberation Mono', monospace;color:#606366">35</div>
<div class="t" style="left:496.7px;top:1153.6px;font-size:22px;font-family:'Liberation Mono', monospace;color:#606366">36</div>
<div class="t" style="left:496.7px;top:1193.4px;font-size:22px;font-family:'Liberation Mono', monospace;color:#606366">37</div>
<div class="t" style="left:496.7px;top:1233.2px;font-size:22px;font-family:'Liberation Mono', monospace;color:#606366">38</div>
<div class="t" style="left:496.7px;top:1273.0px;font-size:22px;font-family:'Liberation Mono', monospace;color:#606366">39</div>
<svg class="r" style="left:619px;top:436.25px;" width="22" height="30" viewBox="0 0 22 30"><path d="M6 18.5 C3 16 1.5 13 1.5 10 A9.5 9.5 0 0 1 20.5 10 C20.5 13 19 16 16 18.5 Z" fill="#f0a732"/><rect x="6.5" y="21" width="9" height="2.2" fill="#a9a9a9"/><rect x="7.5" y="25" width="7" height="2.2" fill="#a9a9a9"/></svg>
<div class="t" style="left:720.6px;top:196.3px;font-size:25px;letter-spacing:-0.6px;-webkit-text-stroke:0.12px currentColor;font-family:'Liberation Mono', monospace"><span style="color:#e8bf6a">&lt;androidx.constraintlayout.widget.ConstraintLayout</span></div>
<div class="t" style="left:778.2px;top:236.1px;font-size:25px;letter-spacing:-0.6px;-webkit-text-stroke:0.12px currentColor;font-family:'Liberation Mono', monospace"><span style="color:#9876aa">android</span><span style="color:#bababa">:</span><span style="color:#bababa">id</span><span style="color:#6a8759">=</span><span style="color:#6a8759">&quot;@+id/main_controls_container&quot;</span></div>
<div class="t" style="left:778.2px;top:275.9px;font-size:25px;letter-spacing:-0.6px;-webkit-text-stroke:0.12px currentColor;font-family:'Liberation Mono', monospace"><span style="color:#9876aa">android</span><span style="color:#bababa">:</span><span style="color:#bababa">layout_width</span><span style="color:#6a8759">=</span><span style="color:#6a8759">&quot;match_parent&quot;</span></div>
<div class="t" style="left:778.2px;top:315.7px;font-size:25px;letter-spacing:-0.6px;-webkit-text-stroke:0.12px currentColor;font-family:'Liberation Mono', monospace"><span style="color:#9876aa">android</span><span style="color:#bababa">:</span><span style="color:#bababa">layout_height</span><span style="color:#6a8759">=</span><span style="color:#6a8759">&quot;wrap_content&quot;</span></div>
<div class="t" style="left:778.2px;top:355.5px;font-size:25px;letter-spacing:-0.6px;-webkit-text-stroke:0.12px currentColor;font-family:'Liberation Mono', monospace"><span style="color:#9876aa">android</span><span style="color:#bababa">:</span><span style="color:#bababa">background</span><span style="color:#6a8759">=</span><span style="color:#6a8759">&quot;@color/cardview_dark_background&quot;</span></div>
<div class="t" style="left:778.2px;top:395.3px;font-size:25px;letter-spacing:-0.6px;-webkit-text-stroke:0.12px currentColor;font-family:'Liberation Mono', monospace"><span style="color:#9876aa">android</span><span style="color:#bababa">:</span><span style="color:#bababa">padding</span><span style="color:#6a8759">=</span><span style="color:#6a8759">&quot;12dp&quot;</span></div>
<div class="t" style="left:778.2px;top:435.1px;font-size:25px;letter-spacing:-0.6px;-webkit-text-stroke:0.12px currentColor;font-family:'Liberation Mono', monospace"><span style="color:#9876aa">app</span><span style="color:#bababa">:</span><span style="color:#bababa">layout_constraintTop_toTopOf</span><span style="color:#6a8759">=</span><span style="color:#6a8759">&quot;parent&quot;</span><span style="color:#e8bf6a">&gt;</span></div>
<div class="t" style="left:778.2px;top:514.7px;font-size:25px;letter-spacing:-0.6px;-webkit-text-stroke:0.12px currentColor;font-family:'Liberation Mono', monospace"><span style="color:#e8bf6a">&lt;EditText</span></div>
<div class="t" style="left:835.8px;top:554.5px;font-size:25px;letter-spacing:-0.6px;-webkit-text-stroke:0.12px currentColor;font-family:'Liberation Mono', monospace"><span style="color:#9876aa">android</span><span style="color:#bababa">:</span><span style="color:#bababa">id</span><span style="color:#6a8759">=</span><span style="color:#6a8759">&quot;@+id/main_token&quot;</span></div>
<div class="t" style="left:835.8px;top:594.2px;font-size:25px;letter-spacing:-0.6px;-webkit-text-stroke:0.12px currentColor;font-family:'Liberation Mono', monospace"><span style="color:#9876aa">android</span><span style="color:#bababa">:</span><span style="color:#bababa">layout_width</span><span style="color:#6a8759">=</span><span style="color:#6a8759">&quot;0dp&quot;</span></div>
<div class="t" style="left:835.8px;top:634.0px;font-size:25px;letter-spacing:-0.6px;-webkit-text-stroke:0.12px currentColor;font-family:'Liberation Mono', monospace"><span style="color:#9876aa">android</span><span style="color:#bababa">:</span><span style="color:#bababa">layout_height</span><span style="color:#6a8759">=</span><span style="color:#6a8759">&quot;wrap_content&quot;</span></div>
<div class="t" style="left:835.8px;top:673.8px;font-size:25px;letter-spacing:-0.6px;-webkit-text-stroke:0.12px currentColor;font-family:'Liberation Mono', monospace"><span style="color:#9876aa">android</span><span style="color:#bababa">:</span><span style="color:#bababa">autofillHints</span><span style="color:#6a8759">=</span><span style="color:#6a8759">&quot;@null&quot;</span></div>
<div class="t" style="left:835.8px;top:713.6px;font-size:25px;letter-spacing:-0.6px;-webkit-text-stroke:0.12px currentColor;font-family:'Liberation Mono', monospace"><span style="color:#9876aa">android</span><span style="color:#bababa">:</span><span style="color:#bababa">backgroundTint</span><span style="color:#6a8759">=</span><span style="color:#6a8759">&quot;@color/white&quot;</span></div>
<div class="t" style="left:835.8px;top:753.4px;font-size:25px;letter-spacing:-0.6px;-webkit-text-stroke:0.12px currentColor;font-family:'Liberation Mono', monospace"><span style="color:#9876aa">android</span><span style="color:#bababa">:</span><span style="color:#bababa">hint</span><span style="color:#6a8759">=</span><span style="color:#a9b7c6;background:#3b3b3b">&quot;Participant Token&quot;</span></div>
<div class="t" style="left:835.8px;top:793.2px;font-size:25px;letter-spacing:-0.6px;-webkit-text-stroke:0.12px currentColor;font-family:'Liberation Mono', monospace"><span style="color:#9876aa">android</span><span style="color:#bababa">:</span><span style="color:#bababa">imeOptions</span><span style="color:#6a8759">=</span><span style="color:#6a8759">&quot;actionDone&quot;</span></div>
<div class="t" style="left:835.8px;top:833.0px;font-size:25px;letter-spacing:-0.6px;-webkit-text-stroke:0.12px currentColor;font-family:'Liberation Mono', monospace"><span style="color:#9876aa">android</span><span style="color:#bababa">:</span><span style="color:#bababa">inputType</span><span style="color:#6a8759">=</span><span style="color:#6a8759">&quot;text&quot;</span></div>
<div class="t" style="left:835.8px;top:872.8px;font-size:25px;letter-spacing:-0.6px;-webkit-text-stroke:0.12px currentColor;font-family:'Liberation Mono', monospace"><span style="color:#9876aa">android</span><span style="color:#bababa">:</span><span style="color:#bababa">textColor</span><span style="color:#6a8759">=</span><span style="color:#6a8759">&quot;@color/white&quot;</span></div>
<div class="t" style="left:835.8px;top:912.6px;font-size:25px;letter-spacing:-0.6px;-webkit-text-stroke:0.12px currentColor;font-family:'Liberation Mono', monospace"><span style="color:#9876aa">app</span><span style="color:#bababa">:</span><span style="color:#bababa">layout_constraintEnd_toStartOf</span><span style="color:#6a8759">=</span><span style="color:#6a8759">&quot;@id/main_join&quot;</span></div>
<div class="t" style="left:835.8px;top:952.4px;font-size:25px;letter-spacing:-0.6px;-webkit-text-stroke:0.12px currentColor;font-family:'Liberation Mono', monospace"><span style="color:#9876aa">app</span><span style="color:#bababa">:</span><span style="color:#bababa">layout_constraintStart_toStartOf</span><span style="color:#6a8759">=</span><span style="color:#6a8759">&quot;parent&quot;</span></div>
<div class="t" style="left:835.8px;top:992.1px;font-size:25px;letter-spacing:-0.6px;-webkit-text-stroke:0.12px currentColor;font-family:'Liberation Mono', monospace"><span style="color:#9876aa">app</span><span style="color:#bababa">:</span><span style="color:#bababa">layout_constraintTop_toTopOf</span><span style="color:#6a8759">=</span><span style="color:#6a8759">&quot;parent&quot;</span> <span style="color:#e8bf6a">/&gt;</span></div>
<div class="t" style="left:778.2px;top:1071.7px;font-size:25px;letter-spacing:-0.6px;-webkit-text-stroke:0.12px currentColor;font-family:'Liberation Mono', monospace"><span style="color:#e8bf6a">&lt;Button</span></div>
<div class="t" style="left:835.8px;top:1111.5px;font-size:25px;letter-spacing:-0.6px;-webkit-text-stroke:0.12px currentColor;font-family:'Liberation Mono', monospace"><span style="color:#9876aa">android</span><span style="color:#bababa">:</span><span style="color:#bababa">id</span><span style="color:#6a8759">=</span><span style="color:#6a8759">&quot;@+id/main_join&quot;</span></div>
<div class="t" style="left:835.8px;top:1151.3px;font-size:25px;letter-spacing:-0.6px;-webkit-text-stroke:0.12px currentColor;font-family:'Liberation Mono', monospace"><span style="color:#9876aa">android</span><span style="color:#bababa">:</span><span style="color:#bababa">layout_width</span><span style="color:#6a8759">=</span><span style="color:#6a8759">&quot;wrap_content&quot;</span></div>
<div class="t" style="left:835.8px;top:1191.1px;font-size:25px;letter-spacing:-0.6px;-webkit-text-stroke:0.12px currentColor;font-family:'Liberation Mono', monospace"><span style="color:#9876aa">android</span><span style="color:#bababa">:</span><span style="color:#bababa">layout_height</span><span style="color:#6a8759">=</span><span style="color:#6a8759">&quot;wrap_content&quot;</span></div>
<div class="t" style="left:835.8px;top:1230.9px;font-size:25px;letter-spacing:-0.6px;-webkit-text-stroke:0.12px currentColor;font-family:'Liberation Mono', monospace"><span style="color:#9876aa">android</span><span style="color:#bababa">:</span><span style="color:#bababa">backgroundTint</span><span style="color:#6a8759">=</span><span style="color:#6a8759">&quot;@color/black&quot;</span></div>
<div class="t" style="left:835.8px;top:1270.7px;font-size:25px;letter-spacing:-0.6px;-webkit-text-stroke:0.12px currentColor;font-family:'Liberation Mono', monospace"><span style="color:#9876aa">android</span><span style="color:#bababa">:</span><span style="color:#bababa">text</span><span style="color:#6a8759">=</span><span style="color:#6a8759">&quot;Join&quot;</span></div>
<svg class="r" style="left:1167px;top:378px;" width="115" height="6" viewBox="0 0 115 6"><polyline points="0,1 3,4 6,1 9,4 12,1 15,4 18,1 21,4 24,1 27,4 30,1 33,4 36,1 39,4 42,1 45,4 48,1 51,4 54,1 57,4 60,1 63,4 66,1 69,4 72,1 75,4 78,1 81,4 84,1 87,4 90,1 93,4 96,1 99,4 102,1 105,4 108,1 111,4 114,1 117,4" fill="none" stroke="#6a8759" stroke-width="1.2"/></svg>
</div>
<div class="r" style="left:1937.5px;top:380px;width:14.5px;height:296px;border-radius:8px;background:#494b4d"></div>
<svg class="r" style="left:1777px;top:213px;" width="30" height="30" viewBox="0 0 30 30"><circle cx="11" cy="11" r="10" fill="#8e3b3b"/><circle cx="15.5" cy="15.5" r="11" fill="#2b2b2b"/><circle cx="15.5" cy="15.5" r="10.5" fill="#c75450"/><rect x="14" y="8.5" width="3" height="9" fill="#2b2b2b"/><rect x="14" y="19.5" width="3" height="3" fill="#2b2b2b"/></svg>
<div class="t" style="left:1808px;top:216.3px;font-size:21px;color:#bbbbbb;font-weight:normal;font-family:'Liberation Sans', sans-serif;">2</div>
<svg class="r" style="left:1832px;top:214px;" width="28" height="24" viewBox="0 0 28 24"><path d="M9 0 L0 17 L4 17 Z" fill="#b07d24"/><path d="M13 3 L25.5 23 L0.5 23 Z" fill="#f0a732"/><rect x="11.8" y="10" width="2.6" height="7" fill="#2b2b2b"/><rect x="11.8" y="18.5" width="2.6" height="2.6" fill="#2b2b2b"/></svg>
<div class="t" style="left:1861px;top:216.3px;font-size:21px;color:#bbbbbb;font-weight:normal;font-family:'Liberation Sans', sans-serif;">1</div>
<svg class="r" style="left:1890px;top:220px;" width="16" height="10" viewBox="0 0 16 10"><polyline points="1,9 8,2 15,9" fill="none" stroke="#bbbbbb" stroke-width="2"/></svg>
<svg class="r" style="left:1928px;top:222px;" width="16" height="10" viewBox="0 0 16 10"><polyline points="1,1 8,8 15,1" fill="none" stroke="#bbbbbb" stroke-width="2"/></svg>
<div class="r" style="left:488px;top:1293px;width:1470px;height:41px;background:#313335;"></div>
<div class="r" style="left:488px;top:1293px;width:1470px;height:1px;background:#393b3d;"></div>
<div class="t" style="left:1116px;top:1303.6px;font-size:23.1px;color:#b3b03a;font-weight:normal;font-family:'Liberation Sans', sans-serif;">t</div>
<svg class="r" style="left:1144px;top:1309px;" width="8" height="12" viewBox="0 0 8 12"><polyline points="1,1 6,6 1,11" fill="none" stroke="#7b7e80" stroke-width="1.5"/></svg>
<div class="t" style="left:1167px;top:1303.6px;font-size:23.1px;color:#c25854;font-weight:normal;font-family:'Liberation Sans', sans-serif;">androidx.constraintlayout.widget.ConstraintLayout</div>
<div class="r" style="left:1958px;top:105px;width:37px;height:1228px;background:#3d3f42;"></div>
<div class="r" style="left:1957px;top:105px;width:1.3px;height:1228px;background:#323436;"></div>
<div class="t" style="left:1988px;top:155px;font-size:21.4px;color:#bbbbbb;transform-origin:0 0;transform:rotate(90deg)">Dependency Updates</div>
<svg class="r" style="left:1966px;top:128px;" width="22" height="24" viewBox="0 0 22 24"><path d="M6 1 L15 1 L15 22 L1 22 L1 6 Z" fill="#9aa7b0"/><path d="M6 1 L1 6 L6 6 Z" fill="#3d3f42"/><rect x="16" y="6" width="5" height="4.5" fill="#e1a336"/><rect x="16" y="12" width="5" height="4.5" fill="#a57bd6"/><rect x="16" y="18" width="5" height="4.5" fill="#3592c4"/></svg>
<svg class="r" style="left:1964px;top:405px;" width="25" height="19" viewBox="0 0 25 19"><g transform="scale(0.88)"><path d="M0.3 20 C0.3 13 2.5 8.5 5.5 6.5 C8 4.5 11 3.6 13.5 3.8 C16 4 18 5.3 20.5 6.2 C22 6.6 23.5 6 24 4.5 C24.5 3 23.5 1.5 22 1.8 C21 2 20.5 2.8 20 2.5 C20.5 0.8 22 0 23.5 0.3 C26 0.8 27.3 3 27.2 5 C27 8 25.5 10.5 22.5 13 C21 14.5 20 17 19.7 20.3 L17.3 20.3 C17 18.8 15.5 17.8 14 17.8 C12.5 17.8 11 18.8 10.7 20.3 L9 20.3 C8.7 18.8 7.5 17.8 6 17.8 C4.5 17.8 3.2 18.8 3 20.3 Z" fill="#b4b4b4"/><path d="M5.5 7.3 C6.5 9.5 7.5 10.8 9 10.8 C10 10.8 11.5 10 12.5 9" fill="none" stroke="#3d3f42" stroke-width="0.9"/><circle cx="18" cy="8.8" r="0.9" fill="#3d3f42"/></g></svg>
<div class="t" style="left:1988px;top:435px;font-size:20.5px;color:#bbbbbb;transform-origin:0 0;transform:rotate(90deg)">Gradle</div>
<svg class="r" style="left:1966px;top:535px;" width="22" height="25" viewBox="0 0 22 25"><path d="M6.5 22 L2 22 A1.5 1.5 0 0 1 0.8 20.5 L0.8 2.5 A1.8 1.8 0 0 1 2.5 0.8 L14.5 0.8 A1.8 1.8 0 0 1 16.3 2.5 L16.3 6" fill="none" stroke="#b4b4b4" stroke-width="1.9"/><rect x="8.6" y="8.4" width="11.6" height="15.5" rx="2" fill="none" stroke="#b4b4b4" stroke-width="2"/><rect x="8.6" y="18" width="11.6" height="6" rx="1.5" fill="#b4b4b4"/><circle cx="14.4" cy="20.5" r="1" fill="#3d3f42"/></svg>
<div class="t" style="left:1988px;top:567.5px;font-size:20.7px;color:#bbbbbb;transform-origin:0 0;transform:rotate(90deg)">Device Manager</div>
<svg class="r" style="left:1964px;top:758px;" width="26" height="27" viewBox="0 0 26 27"><path d="M2.5 19.8 C4.5 17 5 14 5 11 C5 6 8 3.2 12.5 3.2 C17 3.2 20 6 20 11 C20 14 20.5 17 22.5 19.8 Z" fill="#b4b4b4"/><path d="M9.5 21.8 L15.5 21.8 A3 3 0 0 1 9.5 21.8 Z" fill="#b4b4b4"/><circle cx="19.7" cy="6.3" r="6.6" fill="#3d3f42"/><circle cx="19.7" cy="6.3" r="4.8" fill="#3592c4"/></svg>
<div class="t" style="left:1988px;top:791px;font-size:21.5px;color:#bbbbbb;transform-origin:0 0;transform:rotate(90deg)">Notifications</div>
<svg class="r" style="left:1967px;top:955px;" width="21" height="25" viewBox="0 0 21 25"><path d="M7 19.5 L2.5 19.5 A1.5 1.5 0 0 1 1 18 L1 2.5 A1.5 1.5 0 0 1 2.5 1 L11.5 1 A1.5 1.5 0 0 1 13 2.5 L13 11" fill="none" stroke="#b4b4b4" stroke-width="2"/><rect x="9.4" y="13.4" width="9.4" height="6.2" fill="none" stroke="#b4b4b4" stroke-width="2"/><rect x="8.4" y="22" width="11" height="2" fill="#b4b4b4"/></svg>
<div class="t" style="left:1988px;top:986px;font-size:20.7px;color:#bbbbbb;transform-origin:0 0;transform:rotate(90deg)">Running Devices</div>
<svg class="r" style="left:1966px;top:1187px;" width="20" height="23" viewBox="0 0 20 23"><rect x="1.5" y="1" width="17" height="21" rx="1.5" fill="none" stroke="#b4b4b4" stroke-width="2.2"/><rect x="7" y="17" width="6" height="2" fill="#b4b4b4"/></svg>
<div class="t" style="left:1988px;top:1219px;font-size:20.7px;color:#bbbbbb;transform-origin:0 0;transform:rotate(90deg)">Device File Explorer</div>
<div class="r" style="left:1958px;top:1333px;width:37px;height:1px;background:#323436;"></div>
<div class="r" style="left:0px;top:1333px;width:1995px;height:39px;background:#3d3f42;"></div>
<div class="r" style="left:0px;top:1333px;width:1995px;height:1.5px;background:#323436;"></div>
<div class="r" style="left:0px;top:1371.5px;width:1995px;height:1.4px;background:#46484a;"></div>
<div class="r" style="left:0px;top:1372.7px;width:1995px;height:36px;background:#3d3f42;"></div>
<svg class="r" style="left:61px;top:1343px;" width="17" height="22" viewBox="0 0 17 22"><circle cx="4" cy="3.5" r="3" fill="#b4b4b4"/><circle cx="13.5" cy="6.5" r="3" fill="#b4b4b4"/><circle cx="4" cy="18.5" r="3" fill="#b4b4b4"/><path d="M4 3.5 L4 18.5 M13.5 6.5 C13.5 11 10 12 4 12.5" fill="none" stroke="#b4b4b4" stroke-width="2.2"/></svg>
<div class="t" style="left:89.2px;top:1343.6px;font-size:21.5px;color:#bbbbbb;font-weight:normal;font-family:'Liberation Sans', sans-serif;">Version Control</div>
<div class="t" style="left:1122px;top:1343.6px;font-size:21.5px;color:#bbbbbb;font-weight:normal;font-family:'Liberation Sans', sans-serif;">App Inspection</div>
<svg class="r" style="left:1746px;top:1341px;" width="26" height="24" viewBox="0 0 26 24"><path d="M1 14 L1 1 L18 1 M4 17 L4 4 L20 4" fill="none" stroke="#b4b4b4" stroke-width="1.8"/><path d="M8 20 L8 8 L22 8 L22 12" fill="none" stroke="#b4b4b4" stroke-width="1.8"/><circle cx="16.5" cy="16" r="4.2" fill="none" stroke="#b4b4b4" stroke-width="2"/><line x1="19.5" y1="19" x2="24" y2="23.5" stroke="#b4b4b4" stroke-width="2.2"/></svg>
<div class="t" style="left:1778.7px;top:1344.1px;font-size:21.5px;color:#bbbbbb;font-weight:normal;font-family:'Liberation Sans', sans-serif;">Layout Inspector</div>
<svg class="r" style="left:9px;top:1380px;" width="23" height="23" viewBox="0 0 23 23"><rect x="6" y="1" width="16" height="16" fill="none" stroke="#b4b4b4" stroke-width="2"/><path d="M1.5 6 L1.5 21.5 L15 21.5" fill="none" stroke="#b4b4b4" stroke-width="2"/></svg>
<div class="t" style="left:54.7px;top:1380.7px;font-size:21.6px;color:#bbbbbb;font-weight:normal;font-family:'Liberation Sans', sans-serif;">Create a new Layout resource file</div>
<div class="t" style="left:1688px;top:1381.3px;font-size:21.5px;color:#bbbbbb;font-weight:normal;font-family:'Liberation Sans', sans-serif;letter-spacing:-0.8px">19:1</div>
<svg class="r" style="left:1743px;top:1380px;" width="22" height="21" viewBox="0 0 22 21"><path d="M3 9 L3 5.5 A5 5 0 0 1 13 5.5 L13 7" fill="none" stroke="#b4b4b4" stroke-width="2.4"/><rect x="7" y="9" width="14" height="11" fill="#b4b4b4"/></svg>
<svg class="r" style="left:1788px;top:1379px;" width="24" height="22" viewBox="0 0 24 22"><path d="M3 1 L21 1 A2 2 0 0 1 23 3 L23 21 L19 17 L3 17 A2 2 0 0 1 1 15 L1 3 A2 2 0 0 1 3 1 Z" fill="#b4b4b4"/><rect x="10.5" y="4" width="3" height="6.5" fill="#3d3f42"/><rect x="10.5" y="12" width="3" height="3" fill="#3d3f42"/></svg>
<div class="r" style="left:1822px;top:1373px;width:79px;height:35px;background:#595c5e;"></div>
<div class="r" style="left:1822px;top:1373px;width:38px;height:35px;background:#6e7072;"></div>
<div class="t" style="left:1838.9px;top:1380.5px;font-size:22.4px;color:#bbbbbb;font-weight:normal;font-family:'Liberation Sans', sans-serif;">943 of 4096M</div>
</div>
<div class="r" style="left:-2px;top:3px;width:1997px;height:1405px;box-sizing:border-box;border:1.3px solid #626466;border-radius:17px"></div>
<div class="r" style="left:215px;top:621px;width:551px;height:800px;background:#3d3f42;border:1.5px solid #47494b;box-sizing:border-box;box-shadow:-2px 0 16px rgba(0,0,0,0.22)"></div>
<div class="r" style="left:765px;top:621px;width:350px;height:800px;background:#3d3f42;border:1.5px solid #47494b;box-sizing:border-box;box-shadow:2px 0 12px rgba(0,0,0,0.2)"></div>
<div class="r" style="left:217px;top:631.3px;width:548px;height:38.0px;background:#2f65ca;"></div>
<div class="t" style="left:275.5px;top:638.9px;font-size:24.2px;color:#ffffff;font-weight:normal;font-family:'Liberation Sans', sans-serif;">New</div>
<svg class="r" style="left:733px;top:641.5999999999999px;" width="11" height="18" viewBox="0 0 11 18"><polyline points="1.5,1.5 9,9 1.5,16.5" fill="none" stroke="#ffffff" stroke-width="2"/></svg>
<div class="r" style="left:235px;top:676.8px;width:512px;height:1.3px;background:#515456;"></div>
<div class="t" style="left:275.5px;top:693.1px;font-size:24.2px;color:#bbbbbb;font-weight:normal;font-family:'Liberation Sans', sans-serif;">Add C++ to Module</div>
<div class="r" style="left:235px;top:731.0px;width:512px;height:1.3px;background:#515456;"></div>
<svg class="r" style="left:238px;top:745.5px;" width="28" height="26" viewBox="0 0 28 26"><circle cx="6.3" cy="5.3" r="3.6" fill="none" stroke="#bbbbbb" stroke-width="2.1"/><circle cx="6.3" cy="20" r="3.6" fill="none" stroke="#bbbbbb" stroke-width="2.1"/><path d="M8.8 7.6 L25.5 22.3" stroke="#bbbbbb" stroke-width="2.6" stroke-linecap="round"/><path d="M8.8 17.8 L12.8 14.2" stroke="#bbbbbb" stroke-width="2.4"/><path d="M15.2 11.8 L25.5 2.8" stroke="#bbbbbb" stroke-width="3" stroke-linecap="round"/></svg>
<div class="t" style="left:275.5px;top:747.3px;font-size:24.2px;color:#bbbbbb;font-weight:normal;font-family:'Liberation Sans', sans-serif;">Cut</div>
<svg class="r" style="left:703px;top:749.0px;" width="20" height="19" viewBox="0 0 20 19"><path d="M10 1.5 L18.5 10 L14 10 L14 17.5 L6 17.5 L6 10 L1.5 10 Z" fill="none" stroke="#bbbbbb" stroke-width="1.8" stroke-linejoin="round"/></svg>
<svg class="r" style="left:725px;top:750.0px;" width="21" height="18" viewBox="0 0 21 18"><path d="M1.5 1.5 L13 1.5 L19.5 9 L13 16.5 L1.5 16.5 Z" fill="none" stroke="#bbbbbb" stroke-width="1.8" stroke-linejoin="round"/><path d="M5 5.5 L11 12.5 M11 5.5 L5 12.5" stroke="#bbbbbb" stroke-width="1.8"/></svg>
<svg class="r" style="left:239px;top:783.0px;" width="26" height="26" viewBox="0 0 26 26"><path d="M2.6 19 L2.6 2.5 L17.5 2.5" fill="none" stroke="#bbbbbb" stroke-width="2.6"/><rect x="7" y="6.5" width="16.5" height="18.2" fill="#bbbbbb"/><rect x="10" y="10" width="10" height="2" fill="#3d3f42"/><rect x="10" y="14" width="10" height="2" fill="#3d3f42"/><rect x="10" y="18" width="10" height="2" fill="#3d3f42"/></svg>
<div class="t" style="left:275.5px;top:785.3px;font-size:24.2px;color:#bbbbbb;font-weight:normal;font-family:'Liberation Sans', sans-serif;">Copy</div>
<svg class="r" style="left:711.0px;top:788.0px;" width="20" height="18" viewBox="0 0 20 18"><path d="M6.5 6.5 L13.5 6.5 L13.5 13.5 L6.5 13.5 Z M6.5 6.5 L6.5 4 A2.6 2.6 0 1 0 4 6.5 L16 6.5 A2.6 2.6 0 1 0 13.5 4 L13.5 16 A2.6 2.6 0 1 0 16 13.5 L4 13.5 A2.6 2.6 0 1 0 6.5 16 Z" fill="none" stroke="#bbbbbb" stroke-width="1.8"/></svg>
<div class="t" style="left:734.0px;top:785.5px;font-size:24px;color:#bbbbbb;font-weight:normal;font-family:'Liberation Sans', sans-serif;">J</div>
<div class="t" style="left:275.5px;top:823.3px;font-size:24.2px;color:#bbbbbb;font-weight:normal;font-family:'Liberation Sans', sans-serif;">Copy Path/Reference...</div>
<svg class="r" style="left:241px;top:858.5px;" width="22" height="26" viewBox="0 0 22 26"><rect x="2.5" y="4.5" width="16" height="19.5" fill="none" stroke="#bbbbbb" stroke-width="3"/><rect x="7.5" y="0.5" width="7" height="5" fill="#3d3f42" stroke="#bbbbbb" stroke-width="1.8"/></svg>
<div class="t" style="left:275.5px;top:861.3px;font-size:24.2px;color:#bbbbbb;font-weight:normal;font-family:'Liberation Sans', sans-serif;">Paste</div>
<svg class="r" style="left:706.992px;top:864.0px;" width="20" height="18" viewBox="0 0 20 18"><path d="M6.5 6.5 L13.5 6.5 L13.5 13.5 L6.5 13.5 Z M6.5 6.5 L6.5 4 A2.6 2.6 0 1 0 4 6.5 L16 6.5 A2.6 2.6 0 1 0 13.5 4 L13.5 16 A2.6 2.6 0 1 0 16 13.5 L4 13.5 A2.6 2.6 0 1 0 6.5 16 Z" fill="none" stroke="#bbbbbb" stroke-width="1.8"/></svg>
<div class="t" style="left:729.992px;top:861.5px;font-size:24px;color:#bbbbbb;font-weight:normal;font-family:'Liberation Sans', sans-serif;">K</div>
<div class="r" style="left:235px;top:899.2px;width:512px;height:1.3px;background:#515456;"></div>
<div class="t" style="left:275.5px;top:915.5px;font-size:24.2px;color:#bbbbbb;font-weight:normal;font-family:'Liberation Sans', sans-serif;">Find Usages</div>
<svg class="r" style="left:694.992px;top:919.2px;" width="22" height="17" viewBox="0 0 22 17"><path d="M1 2 L7 2 L15 15 L21 15 M13 2 L21 2" fill="none" stroke="#bbbbbb" stroke-width="2"/></svg>
<div class="t" style="left:717.992px;top:915.7px;font-size:24px;color:#bbbbbb;font-weight:normal;font-family:'Liberation Sans', sans-serif;">F7</div>
<div class="t" style="left:275.5px;top:953.5px;font-size:24.2px;color:#bbbbbb;font-weight:normal;font-family:'Liberation Sans', sans-serif;">Find in Files...</div>
<svg class="r" style="left:683.672px;top:955.2px;" width="20" height="19" viewBox="0 0 20 19"><path d="M10 1.5 L18.5 10 L14 10 L14 17.5 L6 17.5 L6 10 L1.5 10 Z" fill="none" stroke="#bbbbbb" stroke-width="1.8" stroke-linejoin="round"/></svg>
<svg class="r" style="left:705.672px;top:956.2px;" width="20" height="18" viewBox="0 0 20 18"><path d="M6.5 6.5 L13.5 6.5 L13.5 13.5 L6.5 13.5 Z M6.5 6.5 L6.5 4 A2.6 2.6 0 1 0 4 6.5 L16 6.5 A2.6 2.6 0 1 0 13.5 4 L13.5 16 A2.6 2.6 0 1 0 16 13.5 L4 13.5 A2.6 2.6 0 1 0 6.5 16 Z" fill="none" stroke="#bbbbbb" stroke-width="1.8"/></svg>
<div class="t" style="left:728.672px;top:953.7px;font-size:24px;color:#bbbbbb;font-weight:normal;font-family:'Liberation Sans', sans-serif;">U</div>
<div class="t" style="left:275.5px;top:991.5px;font-size:24.2px;color:#bbbbbb;font-weight:normal;font-family:'Liberation Sans', sans-serif;">Replace in Files...</div>
<svg class="r" style="left:660.672px;top:995.2px;" width="22" height="17" viewBox="0 0 22 17"><path d="M1 2 L7 2 L15 15 L21 15 M13 2 L21 2" fill="none" stroke="#bbbbbb" stroke-width="2"/></svg>
<svg class="r" style="left:683.672px;top:993.2px;" width="20" height="19" viewBox="0 0 20 19"><path d="M10 1.5 L18.5 10 L14 10 L14 17.5 L6 17.5 L6 10 L1.5 10 Z" fill="none" stroke="#bbbbbb" stroke-width="1.8" stroke-linejoin="round"/></svg>
<svg class="r" style="left:705.672px;top:994.2px;" width="20" height="18" viewBox="0 0 20 18"><path d="M6.5 6.5 L13.5 6.5 L13.5 13.5 L6.5 13.5 Z M6.5 6.5 L6.5 4 A2.6 2.6 0 1 0 4 6.5 L16 6.5 A2.6 2.6 0 1 0 13.5 4 L13.5 16 A2.6 2.6 0 1 0 16 13.5 L4 13.5 A2.6 2.6 0 1 0 6.5 16 Z" fill="none" stroke="#bbbbbb" stroke-width="1.8"/></svg>
<div class="t" style="left:728.672px;top:991.7px;font-size:24px;color:#bbbbbb;font-weight:normal;font-family:'Liberation Sans', sans-serif;">U</div>
<div class="t" style="left:275.5px;top:1029.5px;font-size:24.2px;color:#bbbbbb;font-weight:normal;font-family:'Liberation Sans', sans-serif;">Analyze</div>
<svg class="r" style="left:733px;top:1032.2px;" width="11" height="18" viewBox="0 0 11 18"><polyline points="1.5,1.5 9,9 1.5,16.5" fill="none" stroke="#bbbbbb" stroke-width="2"/></svg>
<div class="r" style="left:235px;top:1067.4px;width:512px;height:1.3px;background:#515456;"></div>
<div class="t" style="left:275.5px;top:1083.7px;font-size:24.2px;color:#bbbbbb;font-weight:normal;font-family:'Liberation Sans', sans-serif;">Refactor</div>
<svg class="r" style="left:733px;top:1086.4px;" width="11" height="18" viewBox="0 0 11 18"><polyline points="1.5,1.5 9,9 1.5,16.5" fill="none" stroke="#bbbbbb" stroke-width="2"/></svg>
<div class="r" style="left:235px;top:1121.6px;width:512px;height:1.3px;background:#515456;"></div>
<div class="t" style="left:275.5px;top:1137.9px;font-size:24.2px;color:#bbbbbb;font-weight:normal;font-family:'Liberation Sans', sans-serif;">Bookmarks</div>
<svg class="r" style="left:733px;top:1140.6000000000001px;" width="11" height="18" viewBox="0 0 11 18"><polyline points="1.5,1.5 9,9 1.5,16.5" fill="none" stroke="#bbbbbb" stroke-width="2"/></svg>
<svg class="r" style="left:241px;top:1177.1000000000001px;" width="22" height="21" viewBox="0 0 22 21"><path d="M11 0 L16 7 L6 7 Z" fill="#b4b4b4"/><rect x="1" y="11" width="9" height="9" fill="#b4b4b4"/><circle cx="16.5" cy="15.5" r="4.7" fill="#b4b4b4"/></svg>
<div class="t" style="left:275.5px;top:1175.9px;font-size:24.2px;color:#bbbbbb;font-weight:normal;font-family:'Liberation Sans', sans-serif;">Show In Resource Manager</div>
<svg class="r" style="left:686.336px;top:1177.6000000000001px;" width="20" height="19" viewBox="0 0 20 19"><path d="M10 1.5 L18.5 10 L14 10 L14 17.5 L6 17.5 L6 10 L1.5 10 Z" fill="none" stroke="#bbbbbb" stroke-width="1.8" stroke-linejoin="round"/></svg>
<svg class="r" style="left:708.336px;top:1178.6000000000001px;" width="20" height="18" viewBox="0 0 20 18"><path d="M6.5 6.5 L13.5 6.5 L13.5 13.5 L6.5 13.5 Z M6.5 6.5 L6.5 4 A2.6 2.6 0 1 0 4 6.5 L16 6.5 A2.6 2.6 0 1 0 13.5 4 L13.5 16 A2.6 2.6 0 1 0 16 13.5 L4 13.5 A2.6 2.6 0 1 0 6.5 16 Z" fill="none" stroke="#bbbbbb" stroke-width="1.8"/></svg>
<div class="t" style="left:731.336px;top:1176.1px;font-size:24px;color:#bbbbbb;font-weight:normal;font-family:'Liberation Sans', sans-serif;">T</div>
<div class="r" style="left:235px;top:1213.8px;width:512px;height:1.3px;background:#515456;"></div>
<div class="t" style="left:275.5px;top:1230.1px;font-size:24.2px;color:#bbbbbb;font-weight:normal;font-family:'Liberation Sans', sans-serif;">Reformat Code</div>
<svg class="r" style="left:686.656px;top:1233.8000000000002px;" width="22" height="17" viewBox="0 0 22 17"><path d="M1 2 L7 2 L15 15 L21 15 M13 2 L21 2" fill="none" stroke="#bbbbbb" stroke-width="2"/></svg>
<svg class="r" style="left:709.656px;top:1232.8000000000002px;" width="20" height="18" viewBox="0 0 20 18"><path d="M6.5 6.5 L13.5 6.5 L13.5 13.5 L6.5 13.5 Z M6.5 6.5 L6.5 4 A2.6 2.6 0 1 0 4 6.5 L16 6.5 A2.6 2.6 0 1 0 13.5 4 L13.5 16 A2.6 2.6 0 1 0 16 13.5 L4 13.5 A2.6 2.6 0 1 0 6.5 16 Z" fill="none" stroke="#bbbbbb" stroke-width="1.8"/></svg>
<div class="t" style="left:732.656px;top:1230.3px;font-size:24px;color:#bbbbbb;font-weight:normal;font-family:'Liberation Sans', sans-serif;">L</div>
<div class="t" style="left:275.5px;top:1268.1px;font-size:24.2px;color:#bbbbbb;font-weight:normal;font-family:'Liberation Sans', sans-serif;">Optimize Imports</div>
<svg class="r" style="left:686.328px;top:1270.8000000000002px;" width="16" height="10" viewBox="0 0 16 10"><polyline points="1.5,9 8,2 14.5,9" fill="none" stroke="#bbbbbb" stroke-width="2"/></svg>
<svg class="r" style="left:704.328px;top:1271.8000000000002px;" width="22" height="17" viewBox="0 0 22 17"><path d="M1 2 L7 2 L15 15 L21 15 M13 2 L21 2" fill="none" stroke="#bbbbbb" stroke-width="2"/></svg>
<div class="t" style="left:727.328px;top:1268.3px;font-size:24px;color:#bbbbbb;font-weight:normal;font-family:'Liberation Sans', sans-serif;">O</div>
<div class="t" style="left:275.5px;top:1306.1px;font-size:24.2px;color:#bbbbbb;font-weight:normal;font-family:'Liberation Sans', sans-serif;">Delete...</div>
<svg class="r" style="left:725px;top:1308.8000000000002px;" width="21" height="18" viewBox="0 0 21 18"><path d="M1.5 1.5 L13 1.5 L19.5 9 L13 16.5 L1.5 16.5 Z" fill="none" stroke="#bbbbbb" stroke-width="1.8" stroke-linejoin="round"/><path d="M5 5.5 L11 12.5 M11 5.5 L5 12.5" stroke="#bbbbbb" stroke-width="1.8"/></svg>
<div class="r" style="left:235px;top:1344.0px;width:512px;height:1.3px;background:#515456;"></div>
<div class="t" style="left:275.5px;top:1360.3px;font-size:24.2px;color:#bbbbbb;font-weight:normal;font-family:'Liberation Sans', sans-serif;">Open In</div>
<svg class="r" style="left:733px;top:1363.0000000000002px;" width="11" height="18" viewBox="0 0 11 18"><polyline points="1.5,1.5 9,9 1.5,16.5" fill="none" stroke="#bbbbbb" stroke-width="2"/></svg>
<div class="r" style="left:235px;top:1398.2px;width:512px;height:1.3px;background:#515456;"></div>
<svg class="r" style="left:791px;top:635.5999999999999px;" width="26" height="30" viewBox="0 0 26 30"><path d="M7 1 L17 1 L17 28 L1 28 L1 7 Z" fill="#9aa7b0"/><path d="M7 1 L1 7 L7 7 Z" fill="#3d3f42"/><path d="M6 2.8 L2.8 6 L6 6 Z" fill="#9aa7b0"/><rect x="12" y="15" width="14" height="15" fill="#3d3f42"/><path d="M13.5 16.5 L25 16.5 L19 22.5 L25 28.5 L13.5 28.5 Z" fill="#c09cf6"/></svg>
<div class="t" style="left:825px;top:638.8px;font-size:24.3px;color:#bbbbbb;font-weight:normal;font-family:'Liberation Sans', sans-serif;">Kotlin Class/File</div>
<div class="r" style="left:767px;top:669.3px;width:346px;height:38.0px;background:#2f65ca;"></div>
<svg class="r" style="left:788.5px;top:673.5999999999999px;" width="28" height="28" viewBox="0 0 28 28"><path d="M11 0 L3.2 7.5 L11 7.5 Z" fill="#9aacbf"/><path d="M12.4 0 L22 0 L22 12.2 L3.2 12.2 L3.2 8.9 L12.4 8.9 Z" fill="#9aacbf"/><rect x="0" y="14" width="27.5" height="13" fill="#c56a51"/><polyline points="9,16.8 4.6,20.5 9,24.2" fill="none" stroke="#4a3a33" stroke-width="1.9"/><polyline points="12.6,16.8 17,20.5 12.6,24.2" fill="none" stroke="#4a3a33" stroke-width="1.9"/></svg>
<div class="t" style="left:825px;top:676.8px;font-size:24.3px;color:#ffffff;font-weight:normal;font-family:'Liberation Sans', sans-serif;">Layout Resource File</div>
<svg class="r" style="left:789px;top:714.5999999999999px;" width="26" height="20" viewBox="0 0 26 20"><path d="M0 0 L9 0 L12.5 3.6 L26 3.6 L26 19 L0 19 Z" fill="#87939a"/></svg>
<div class="t" style="left:825px;top:714.8px;font-size:24.3px;color:#bbbbbb;font-weight:normal;font-family:'Liberation Sans', sans-serif;">Sample Data Directory</div>
<svg class="r" style="left:792px;top:750.5999999999999px;" width="19" height="26" viewBox="0 0 19 26"><path d="M6 0 L18 0 L18 26 L0 26 L0 6 Z" fill="#9aa7b0"/><path d="M6 0 L0 6 L6 6 Z" fill="#3d3f42"/><path d="M5 1.8 L1.8 5 L5 5 Z" fill="#9aa7b0"/><rect x="4" y="11" width="10" height="2" fill="#3d3f42"/><rect x="4" y="15" width="10" height="2" fill="#3d3f42"/><rect x="4" y="19" width="7" height="2" fill="#3d3f42"/></svg>
<div class="t" style="left:825px;top:752.8px;font-size:24.3px;color:#bbbbbb;font-weight:normal;font-family:'Liberation Sans', sans-serif;">File</div>
<svg class="r" style="left:792px;top:786.5999999999999px;" width="26" height="28" viewBox="0 0 26 28"><path d="M6 2 L18 2 L18 28 L0 28 L0 8 Z" fill="#9aa7b0"/><path d="M6 2 L0 8 L6 8 Z" fill="#3d3f42"/><path d="M5 3.8 L1.8 7 L5 7 Z" fill="#9aa7b0"/><rect x="4" y="13" width="10" height="2" fill="#3d3f42"/><rect x="4" y="17" width="10" height="2" fill="#3d3f42"/><rect x="4" y="21" width="7" height="2" fill="#3d3f42"/><circle cx="18" cy="7.5" r="7.5" fill="#3d3f42"/><circle cx="18" cy="7.5" r="6" fill="#3da7d9"/><path d="M17 3.5 L17.5 8 L20 10" fill="none" stroke="#223" stroke-width="1.4"/></svg>
<div class="t" style="left:825px;top:790.8px;font-size:24.3px;color:#bbbbbb;font-weight:normal;font-family:'Liberation Sans', sans-serif;">Scratch File</div>
<svg class="r" style="left:1030.672px;top:792.5999999999999px;" width="20" height="19" viewBox="0 0 20 19"><path d="M10 1.5 L18.5 10 L14 10 L14 17.5 L6 17.5 L6 10 L1.5 10 Z" fill="none" stroke="#bbbbbb" stroke-width="1.8" stroke-linejoin="round"/></svg>
<svg class="r" style="left:1052.672px;top:793.5999999999999px;" width="20" height="18" viewBox="0 0 20 18"><path d="M6.5 6.5 L13.5 6.5 L13.5 13.5 L6.5 13.5 Z M6.5 6.5 L6.5 4 A2.6 2.6 0 1 0 4 6.5 L16 6.5 A2.6 2.6 0 1 0 13.5 4 L13.5 16 A2.6 2.6 0 1 0 16 13.5 L4 13.5 A2.6 2.6 0 1 0 6.5 16 Z" fill="none" stroke="#bbbbbb" stroke-width="1.8"/></svg>
<div class="t" style="left:1075.672px;top:791.1px;font-size:24px;color:#bbbbbb;font-weight:normal;font-family:'Liberation Sans', sans-serif;">N</div>
<svg class="r" style="left:789px;top:828.5999999999999px;" width="26" height="20" viewBox="0 0 26 20"><path d="M0 0 L9 0 L12.5 3.6 L26 3.6 L26 19 L0 19 Z" fill="#87939a"/></svg>
<div class="t" style="left:825px;top:828.8px;font-size:24.3px;color:#bbbbbb;font-weight:normal;font-family:'Liberation Sans', sans-serif;">Directory</div>
<svg class="r" style="left:790.5px;top:871.0999999999999px;" width="22" height="14" viewBox="0 0 22 14"><path d="M11.0 3.696 C3.3 3.696 0 9.899999999999999 0 13.2 L22 13.2 C22 9.899999999999999 18.7 3.696 11.0 3.696 Z" fill="#3ddc84"/><line x1="4.84" y1="0" x2="7.260000000000001" y2="5.28" stroke="#3ddc84" stroke-width="1.76"/><line x1="17.16" y1="0" x2="14.74" y2="5.28" stroke="#3ddc84" stroke-width="1.76"/><circle cx="6.6" cy="9.504" r="0.99" fill="#3d3f42"/><circle cx="15.399999999999999" cy="9.504" r="0.99" fill="#3d3f42"/></svg>
<div class="t" style="left:825px;top:866.8px;font-size:24.3px;color:#bbbbbb;font-weight:normal;font-family:'Liberation Sans', sans-serif;">Image Asset</div>
<svg class="r" style="left:790.5px;top:909.0999999999999px;" width="22" height="14" viewBox="0 0 22 14"><path d="M11.0 3.696 C3.3 3.696 0 9.899999999999999 0 13.2 L22 13.2 C22 9.899999999999999 18.7 3.696 11.0 3.696 Z" fill="#3ddc84"/><line x1="4.84" y1="0" x2="7.260000000000001" y2="5.28" stroke="#3ddc84" stroke-width="1.76"/><line x1="17.16" y1="0" x2="14.74" y2="5.28" stroke="#3ddc84" stroke-width="1.76"/><circle cx="6.6" cy="9.504" r="0.99" fill="#3d3f42"/><circle cx="15.399999999999999" cy="9.504" r="0.99" fill="#3d3f42"/></svg>
<div class="t" style="left:825px;top:904.8px;font-size:24.3px;color:#bbbbbb;font-weight:normal;font-family:'Liberation Sans', sans-serif;">Vector Asset</div>
<div class="r" style="left:785px;top:942.8px;width:310px;height:1.3px;background:#515456;"></div>
<svg class="r" style="left:791px;top:955.8px;" width="26" height="29" viewBox="0 0 26 29"><path d="M3 1 L15 1 C19 1 19 7 15 7 L17 7 L17 27 L5 27 C1 27 1 21 5 21 L1 21 L1 5 C1 1 3 1 3 1 Z" fill="#9aa7b0"/><rect x="12" y="15" width="14" height="14" fill="#3d3f42"/><path d="M13.5 16.5 L25 16.5 L19 22.5 L25 28.5 L13.5 28.5 Z" fill="#c09cf6"/></svg>
<div class="t" style="left:825px;top:959.0px;font-size:24.3px;color:#bbbbbb;font-weight:normal;font-family:'Liberation Sans', sans-serif;">Kotlin Script (Beta)</div>
<svg class="r" style="left:791px;top:993.8px;" width="26" height="29" viewBox="0 0 26 29"><path d="M3 1 L15 1 C19 1 19 7 15 7 L17 7 L17 27 L5 27 C1 27 1 21 5 21 L1 21 L1 5 C1 1 3 1 3 1 Z" fill="#9aa7b0"/><rect x="12" y="15" width="14" height="14" fill="#3d3f42"/><path d="M13.5 16.5 L25 16.5 L19 22.5 L25 28.5 L13.5 28.5 Z" fill="#c09cf6"/></svg>
<div class="t" style="left:825px;top:997.0px;font-size:24.3px;color:#bbbbbb;font-weight:normal;font-family:'Liberation Sans', sans-serif;">Kotlin Worksheet (Beta)</div>
<svg class="r" style="left:788px;top:1030.8px;" width="28" height="26" viewBox="0 0 28 26"><path d="M14 1 L1 25 L14 17 Z" fill="#1a4fc7"/><path d="M14 1 L27 25 L14 17 Z" fill="#d13a37"/><path d="M1 25 L14 17 L27 25 Z" fill="#3aa845"/></svg>
<div class="t" style="left:825px;top:1035.0px;font-size:24.3px;color:#bbbbbb;font-weight:normal;font-family:'Liberation Sans', sans-serif;">CMakeLists.txt</div>
<div class="r" style="left:785px;top:1073.0px;width:310px;height:1.3px;background:#515456;"></div>
<svg class="r" style="left:790.5px;top:1093.5px;" width="22" height="14" viewBox="0 0 22 14"><path d="M11.0 3.696 C3.3 3.696 0 9.899999999999999 0 13.2 L22 13.2 C22 9.899999999999999 18.7 3.696 11.0 3.696 Z" fill="#3ddc84"/><line x1="4.84" y1="0" x2="7.260000000000001" y2="5.28" stroke="#3ddc84" stroke-width="1.76"/><line x1="17.16" y1="0" x2="14.74" y2="5.28" stroke="#3ddc84" stroke-width="1.76"/><circle cx="6.6" cy="9.504" r="0.99" fill="#3d3f42"/><circle cx="15.399999999999999" cy="9.504" r="0.99" fill="#3d3f42"/></svg>
<div class="t" style="left:825px;top:1089.2px;font-size:24.3px;color:#bbbbbb;font-weight:normal;font-family:'Liberation Sans', sans-serif;">Activity</div>
<svg class="r" style="left:1080px;top:1092.0px;" width="11" height="18" viewBox="0 0 11 18"><polyline points="1.5,1.5 9,9 1.5,16.5" fill="none" stroke="#bbbbbb" stroke-width="2"/></svg>
<svg class="r" style="left:790.5px;top:1131.5px;" width="22" height="14" viewBox="0 0 22 14"><path d="M11.0 3.696 C3.3 3.696 0 9.899999999999999 0 13.2 L22 13.2 C22 9.899999999999999 18.7 3.696 11.0 3.696 Z" fill="#3ddc84"/><line x1="4.84" y1="0" x2="7.260000000000001" y2="5.28" stroke="#3ddc84" stroke-width="1.76"/><line x1="17.16" y1="0" x2="14.74" y2="5.28" stroke="#3ddc84" stroke-width="1.76"/><circle cx="6.6" cy="9.504" r="0.99" fill="#3d3f42"/><circle cx="15.399999999999999" cy="9.504" r="0.99" fill="#3d3f42"/></svg>
<div class="t" style="left:825px;top:1127.2px;font-size:24.3px;color:#bbbbbb;font-weight:normal;font-family:'Liberation Sans', sans-serif;">Fragment</div>
<svg class="r" style="left:1080px;top:1130.0px;" width="11" height="18" viewBox="0 0 11 18"><polyline points="1.5,1.5 9,9 1.5,16.5" fill="none" stroke="#bbbbbb" stroke-width="2"/></svg>
<svg class="r" style="left:790.5px;top:1169.5px;" width="22" height="14" viewBox="0 0 22 14"><path d="M11.0 3.696 C3.3 3.696 0 9.899999999999999 0 13.2 L22 13.2 C22 9.899999999999999 18.7 3.696 11.0 3.696 Z" fill="#3ddc84"/><line x1="4.84" y1="0" x2="7.260000000000001" y2="5.28" stroke="#3ddc84" stroke-width="1.76"/><line x1="17.16" y1="0" x2="14.74" y2="5.28" stroke="#3ddc84" stroke-width="1.76"/><circle cx="6.6" cy="9.504" r="0.99" fill="#3d3f42"/><circle cx="15.399999999999999" cy="9.504" r="0.99" fill="#3d3f42"/></svg>
<div class="t" style="left:825px;top:1165.2px;font-size:24.3px;color:#bbbbbb;font-weight:normal;font-family:'Liberation Sans', sans-serif;">Folder</div>
<svg class="r" style="left:1080px;top:1168.0px;" width="11" height="18" viewBox="0 0 11 18"><polyline points="1.5,1.5 9,9 1.5,16.5" fill="none" stroke="#bbbbbb" stroke-width="2"/></svg>
<svg class="r" style="left:790.5px;top:1207.5px;" width="22" height="14" viewBox="0 0 22 14"><path d="M11.0 3.696 C3.3 3.696 0 9.899999999999999 0 13.2 L22 13.2 C22 9.899999999999999 18.7 3.696 11.0 3.696 Z" fill="#3ddc84"/><line x1="4.84" y1="0" x2="7.260000000000001" y2="5.28" stroke="#3ddc84" stroke-width="1.76"/><line x1="17.16" y1="0" x2="14.74" y2="5.28" stroke="#3ddc84" stroke-width="1.76"/><circle cx="6.6" cy="9.504" r="0.99" fill="#3d3f42"/><circle cx="15.399999999999999" cy="9.504" r="0.99" fill="#3d3f42"/></svg>
<div class="t" style="left:825px;top:1203.2px;font-size:24.3px;color:#bbbbbb;font-weight:normal;font-family:'Liberation Sans', sans-serif;">Service</div>
<svg class="r" style="left:1080px;top:1206.0px;" width="11" height="18" viewBox="0 0 11 18"><polyline points="1.5,1.5 9,9 1.5,16.5" fill="none" stroke="#bbbbbb" stroke-width="2"/></svg>
<svg class="r" style="left:790.5px;top:1245.5px;" width="22" height="14" viewBox="0 0 22 14"><path d="M11.0 3.696 C3.3 3.696 0 9.899999999999999 0 13.2 L22 13.2 C22 9.899999999999999 18.7 3.696 11.0 3.696 Z" fill="#3ddc84"/><line x1="4.84" y1="0" x2="7.260000000000001" y2="5.28" stroke="#3ddc84" stroke-width="1.76"/><line x1="17.16" y1="0" x2="14.74" y2="5.28" stroke="#3ddc84" stroke-width="1.76"/><circle cx="6.6" cy="9.504" r="0.99" fill="#3d3f42"/><circle cx="15.399999999999999" cy="9.504" r="0.99" fill="#3d3f42"/></svg>
<div class="t" style="left:825px;top:1241.2px;font-size:24.3px;color:#bbbbbb;font-weight:normal;font-family:'Liberation Sans', sans-serif;">UiComponent</div>
<svg class="r" style="left:1080px;top:1244.0px;" width="11" height="18" viewBox="0 0 11 18"><polyline points="1.5,1.5 9,9 1.5,16.5" fill="none" stroke="#bbbbbb" stroke-width="2"/></svg>
<svg class="r" style="left:790.5px;top:1283.5px;" width="22" height="14" viewBox="0 0 22 14"><path d="M11.0 3.696 C3.3 3.696 0 9.899999999999999 0 13.2 L22 13.2 C22 9.899999999999999 18.7 3.696 11.0 3.696 Z" fill="#3ddc84"/><line x1="4.84" y1="0" x2="7.260000000000001" y2="5.28" stroke="#3ddc84" stroke-width="1.76"/><line x1="17.16" y1="0" x2="14.74" y2="5.28" stroke="#3ddc84" stroke-width="1.76"/><circle cx="6.6" cy="9.504" r="0.99" fill="#3d3f42"/><circle cx="15.399999999999999" cy="9.504" r="0.99" fill="#3d3f42"/></svg>
<div class="t" style="left:825px;top:1279.2px;font-size:24.3px;color:#bbbbbb;font-weight:normal;font-family:'Liberation Sans', sans-serif;">Automotive</div>
<svg class="r" style="left:1080px;top:1282.0px;" width="11" height="18" viewBox="0 0 11 18"><polyline points="1.5,1.5 9,9 1.5,16.5" fill="none" stroke="#bbbbbb" stroke-width="2"/></svg>
<svg class="r" style="left:790.5px;top:1321.5px;" width="22" height="14" viewBox="0 0 22 14"><path d="M11.0 3.696 C3.3 3.696 0 9.899999999999999 0 13.2 L22 13.2 C22 9.899999999999999 18.7 3.696 11.0 3.696 Z" fill="#3ddc84"/><line x1="4.84" y1="0" x2="7.260000000000001" y2="5.28" stroke="#3ddc84" stroke-width="1.76"/><line x1="17.16" y1="0" x2="14.74" y2="5.28" stroke="#3ddc84" stroke-width="1.76"/><circle cx="6.6" cy="9.504" r="0.99" fill="#3d3f42"/><circle cx="15.399999999999999" cy="9.504" r="0.99" fill="#3d3f42"/></svg>
<div class="t" style="left:825px;top:1317.2px;font-size:24.3px;color:#bbbbbb;font-weight:normal;font-family:'Liberation Sans', sans-serif;">XML</div>
<svg class="r" style="left:1080px;top:1320.0px;" width="11" height="18" viewBox="0 0 11 18"><polyline points="1.5,1.5 9,9 1.5,16.5" fill="none" stroke="#bbbbbb" stroke-width="2"/></svg>
<svg class="r" style="left:790.5px;top:1359.5px;" width="22" height="14" viewBox="0 0 22 14"><path d="M11.0 3.696 C3.3 3.696 0 9.899999999999999 0 13.2 L22 13.2 C22 9.899999999999999 18.7 3.696 11.0 3.696 Z" fill="#3ddc84"/><line x1="4.84" y1="0" x2="7.260000000000001" y2="5.28" stroke="#3ddc84" stroke-width="1.76"/><line x1="17.16" y1="0" x2="14.74" y2="5.28" stroke="#3ddc84" stroke-width="1.76"/><circle cx="6.6" cy="9.504" r="0.99" fill="#3d3f42"/><circle cx="15.399999999999999" cy="9.504" r="0.99" fill="#3d3f42"/></svg>
<div class="t" style="left:825px;top:1355.2px;font-size:24.3px;color:#bbbbbb;font-weight:normal;font-family:'Liberation Sans', sans-serif;">Wear</div>
<svg class="r" style="left:1080px;top:1358.0px;" width="11" height="18" viewBox="0 0 11 18"><polyline points="1.5,1.5 9,9 1.5,16.5" fill="none" stroke="#bbbbbb" stroke-width="2"/></svg>
<svg class="r" style="left:790.5px;top:1397.5px;" width="22" height="14" viewBox="0 0 22 14"><path d="M11.0 3.696 C3.3 3.696 0 9.899999999999999 0 13.2 L22 13.2 C22 9.899999999999999 18.7 3.696 11.0 3.696 Z" fill="#3ddc84"/><line x1="4.84" y1="0" x2="7.260000000000001" y2="5.28" stroke="#3ddc84" stroke-width="1.76"/><line x1="17.16" y1="0" x2="14.74" y2="5.28" stroke="#3ddc84" stroke-width="1.76"/><circle cx="6.6" cy="9.504" r="0.99" fill="#3d3f42"/><circle cx="15.399999999999999" cy="9.504" r="0.99" fill="#3d3f42"/></svg>
<div class="t" style="left:825px;top:1393.2px;font-size:24.3px;color:#bbbbbb;font-weight:normal;font-family:'Liberation Sans', sans-serif;">AIDL</div>
<svg class="r" style="left:1080px;top:1396.0px;" width="11" height="18" viewBox="0 0 11 18"><polyline points="1.5,1.5 9,9 1.5,16.5" fill="none" stroke="#bbbbbb" stroke-width="2"/></svg>
</body></html>
